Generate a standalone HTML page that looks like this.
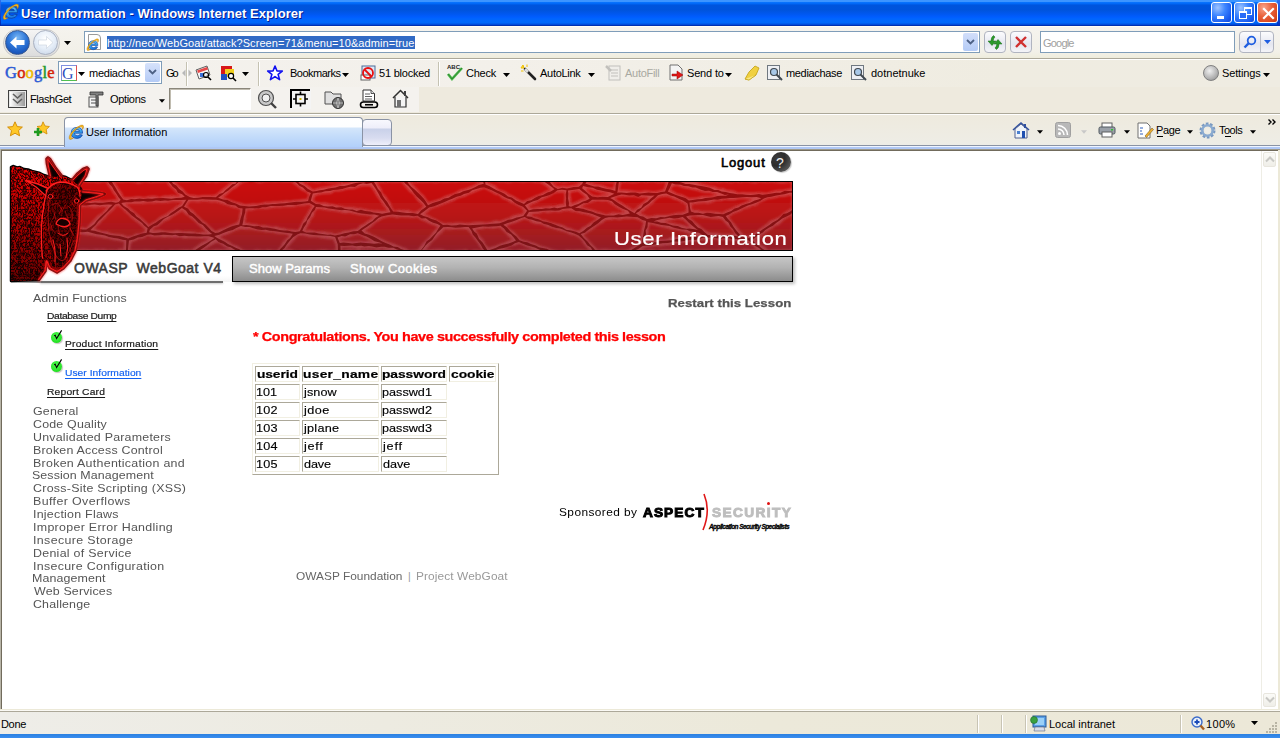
<!DOCTYPE html>
<html><head><meta charset="utf-8"><title>User Information</title>
<style>
html,body{margin:0;padding:0;width:1280px;height:738px;overflow:hidden;background:#fff;}
body{position:relative;font-family:"Liberation Sans",sans-serif;}
.a{position:absolute;box-sizing:border-box;}
.t{position:absolute;white-space:pre;line-height:1;}
svg{position:absolute;overflow:visible;}
</style></head><body>
<div class=a style="left:0;top:0;width:1280px;height:26px;background:linear-gradient(to bottom,#3d95ff 0px,#3d95ff 2px,#0a76ff 2px,#0066f5 4px,#0055dd 5px,#0054dc 10px,#0058f0 14px,#005dff 17px,#0066ff 19px,#0068f8 23px,#0050e0 24px,#0046d6 25px,#0030b0 25px,#0030b0 26px)"></div>
<div class=a style="left:0;top:0;width:1px;height:26px;background:linear-gradient(to bottom,#2a70f0,#0028b0)"></div>
<div class=a style="left:1277px;top:0;width:3px;height:26px;background:linear-gradient(to bottom,#2a70f0,#0030c0)"></div>

<svg style="left:2px;top:3px" width="17" height="17" viewBox="0 0 16 16">
<defs><linearGradient id="ieB23" x1="0" y1="0" x2="0.3" y2="1"><stop offset="0" stop-color="#8ce0ff"/><stop offset="0.5" stop-color="#3aa8f0"/><stop offset="1" stop-color="#1a78e0"/></linearGradient></defs>
<path d="M14.6 9.2 L6.4 9.2 Q6.6 11.8 9.2 11.8 Q10.9 11.8 11.9 10.6 L14.4 11 Q13 14.4 9.2 14.4 Q3.2 14.4 3.2 9 Q3.2 3.4 9.2 3.4 Q14.6 3.4 14.6 9.2 Z M6.5 7.3 L11.6 7.3 Q11.3 5.5 9.1 5.5 Q6.9 5.5 6.5 7.3 Z" fill="url(#ieB23)" stroke="#0c3c9c" stroke-width="0.7"/>
<path d="M1.8 15.4 Q-0.2 13.4 3.6 8.4 Q7.8 3 12.8 1.2 Q15.8 0.4 15.6 3 Q15.4 4.4 14.4 5.4 Q14.8 3 13.2 2.8 Q9.8 3 6.4 7 Q2.8 11.2 3 13.4 Q3.4 14.6 5.6 13.8 Q3.6 15.8 1.8 15.4 Z" fill="#fbbc1c" stroke="#b07008" stroke-width="0.45"/>
</svg>
<div class=a style="left:1211px;top:2px;width:21px;height:21px;border:1px solid #fff;border-radius:3px;background:radial-gradient(ellipse at 30% 25%,#9ec4ff 0%,#3e86ff 40%,#1c5ef0 75%,#1048d8 100%);overflow:hidden"><div class=a style="left:5px;top:13px;width:7px;height:3px;background:#fff"></div></div><div class=a style="left:1234px;top:2px;width:21px;height:21px;border:1px solid #fff;border-radius:3px;background:radial-gradient(ellipse at 30% 25%,#9ec4ff 0%,#3e86ff 40%,#1c5ef0 75%,#1048d8 100%);overflow:hidden"><div class=a style="left:9px;top:4px;width:8px;height:8px;border:1px solid #fff;border-top-width:2px"></div><div class=a style="left:4px;top:8px;width:8px;height:8px;border:1px solid #fff;border-top-width:2px;background:#2a6cf8"></div></div><div class=a style="left:1257px;top:2px;width:21px;height:21px;border:1px solid #fff;border-radius:3px;background:radial-gradient(ellipse at 30% 25%,#f8a58a 0%,#e8603a 45%,#d8461e 80%,#c03a14 100%);overflow:hidden"><svg style="left:5px;top:5px" width="11" height="11" viewBox="0 0 11 11"><path d="M1 1 L10 10 M10 1 L1 10" stroke="#fff" stroke-width="2.2" stroke-linecap="square"/></svg></div>
<div class=a style="left:0;top:26px;width:1280px;height:33px;background:linear-gradient(to bottom,#fffdf4 0,#fffdf4 1px,#f5f3ee 1px,#f2f0e8 26px,#eeecdc 32px)"></div>
<div class=a style="left:0;top:58px;width:1280px;height:1px;background:#aca899"></div>
<div class=a style="left:0;top:59px;width:1280px;height:1px;background:#fff"></div>

<div class=a style="left:3px;top:29px;width:57px;height:28px;border-radius:14px;background:linear-gradient(#f4f4f4,#dcdcdc);border:1px solid #c8c8c8"></div>
<div class=a style="left:5px;top:30px;width:25px;height:25px;border-radius:50%;background:radial-gradient(circle at 50% 30%,#7ab8f5 0%,#2e76d8 45%,#0a3fa8 100%);border:1px solid #3a5a90"></div>
<svg style="left:9px;top:35px" width="17" height="15" viewBox="0 0 17 15"><path d="M1 7.5 L7.5 1.5 L7.5 5 L15.5 5 L15.5 10 L7.5 10 L7.5 13.5 Z" fill="#fff"/></svg>
<div class=a style="left:33px;top:30px;width:25px;height:25px;border-radius:50%;background:radial-gradient(circle at 50% 35%,#ffffff 0%,#e6eef8 50%,#c2d0e4 100%);border:1px solid #a8b0c0"></div>
<svg style="left:37px;top:35px" width="17" height="15" viewBox="0 0 17 15"><path d="M16 7.5 L9.5 1.5 L9.5 5 L1.5 5 L1.5 10 L9.5 10 L9.5 13.5 Z" fill="#fff" stroke="#c8d0dc" stroke-width="0.6"/></svg>
<svg style="left:64px;top:41px" width="7" height="4" viewBox="0 0 7 4"><path d="M0 0 L7 0 L3.5 4 Z" fill="#000"/></svg>

<div class=a style="left:84px;top:31px;width:896px;height:22px;border:1px solid #7f9db9;background:#fff"></div>
<div class=a style="left:88px;top:34px;width:13px;height:16px;background:#fff;border:1px solid #9a9a9a;border-radius:0 4px 0 0"></div>

<svg style="left:86px;top:38px" width="13" height="13" viewBox="0 0 16 16">
<defs><linearGradient id="ieB8638" x1="0" y1="0" x2="0.3" y2="1"><stop offset="0" stop-color="#8ce0ff"/><stop offset="0.5" stop-color="#3aa8f0"/><stop offset="1" stop-color="#1a78e0"/></linearGradient></defs>
<path d="M14.6 9.2 L6.4 9.2 Q6.6 11.8 9.2 11.8 Q10.9 11.8 11.9 10.6 L14.4 11 Q13 14.4 9.2 14.4 Q3.2 14.4 3.2 9 Q3.2 3.4 9.2 3.4 Q14.6 3.4 14.6 9.2 Z M6.5 7.3 L11.6 7.3 Q11.3 5.5 9.1 5.5 Q6.9 5.5 6.5 7.3 Z" fill="url(#ieB8638)" stroke="#0c3c9c" stroke-width="0.7"/>
<path d="M1.8 15.4 Q-0.2 13.4 3.6 8.4 Q7.8 3 12.8 1.2 Q15.8 0.4 15.6 3 Q15.4 4.4 14.4 5.4 Q14.8 3 13.2 2.8 Q9.8 3 6.4 7 Q2.8 11.2 3 13.4 Q3.4 14.6 5.6 13.8 Q3.6 15.8 1.8 15.4 Z" fill="#fbbc1c" stroke="#b07008" stroke-width="0.45"/>
</svg>
<div class=a style="left:107px;top:36px;width:308px;height:13px;background:#316ac5"></div>
<div class=a style="left:963px;top:33px;width:15px;height:18px;background:linear-gradient(#d2defa,#b4cbf6);border-radius:2px"></div>
<svg style="left:966px;top:39px" width="9" height="6" viewBox="0 0 9 6"><path d="M1 1 L4.5 4.5 L8 1" fill="none" stroke="#4d6185" stroke-width="1.8"/></svg>
<div class=a style="left:984px;top:31px;width:22px;height:22px;border:1px solid #b0b4c0;border-radius:4px;background:linear-gradient(#fcfcfe,#e4e6f0 60%,#f4f4f8)"></div>
<svg style="left:986px;top:34px" width="18" height="17" viewBox="0 0 18 17"><path d="M7.5 1.5 Q5 3 5 7 L2 7 L6 11.5 L10 7 L7.2 7 Q7.2 4.5 9 3 Z" fill="#2a9a2a" stroke="#1a6a1a" stroke-width="0.5"/><path d="M10.5 15.5 Q13 14 13 10 L16 10 L12 5.5 L8 10 L10.8 10 Q10.8 12.5 9 14 Z" fill="#2a9a2a" stroke="#1a6a1a" stroke-width="0.5"/></svg>
<div class=a style="left:1010px;top:31px;width:22px;height:22px;border:1px solid #b0b4c0;border-radius:4px;background:linear-gradient(#fcfcfe,#e4e6f0 60%,#f4f4f8)"></div>
<svg style="left:1014px;top:35px" width="14" height="14" viewBox="0 0 14 14"><path d="M2 2 L12 12 M12 2 L2 12" stroke="#d03030" stroke-width="2.4"/></svg>
<div class=a style="left:1040px;top:31px;width:195px;height:22px;border:1px solid #7f9db9;background:#fff"></div>
<div class=a style="left:1239px;top:31px;width:35px;height:22px;border:1px solid #b0b4c0;border-radius:4px;background:linear-gradient(#fcfcfe,#e4e6f0 60%,#f4f4f8)"></div>
<div class=a style="left:1260px;top:32px;width:1px;height:20px;background:#b8bcc8"></div>
<svg style="left:1243px;top:35px" width="14" height="14" viewBox="0 0 14 14"><circle cx="8.5" cy="5.5" r="3.8" fill="none" stroke="#1f5ee0" stroke-width="1.8"/><path d="M5.8 8.2 L1.5 12.5" stroke="#1f5ee0" stroke-width="2.4"/></svg>
<svg style="left:1264px;top:40px" width="7" height="4" viewBox="0 0 7 4"><path d="M0 0 L7 0 L3.5 4 Z" fill="#1f5ee0"/></svg>

<div class=a style="left:0;top:60px;width:1280px;height:53px;background:#eeeade"></div>
<div class=a style="left:0;top:60px;width:1280px;height:27px;background:linear-gradient(to right,#f4f2ee 0,#f3f0ea 500px,#efece1 1000px,#efece2 1280px)"></div>
<div class=a style="left:0;top:87px;width:419px;height:25px;background:#f4f2ee"></div>
<div class=a style="left:0;top:113px;width:1280px;height:1px;background:#aca899"></div>
<div class=a style="left:0;top:114px;width:1280px;height:1px;background:#fff"></div>

<div class=a style="left:58px;top:61px;width:104px;height:23px;border:1px solid #7f9db9;background:#fff"></div>
<div class=a style="left:61px;top:65px;width:16px;height:16px;border:1px solid;border-color:#8090e0 #e05050 #50c050 #8090e0;background:#fff"></div>
<div class=a style="left:145px;top:63px;width:15px;height:19px;background:linear-gradient(#d6e2fb,#b4cbf6);border-radius:2px"></div>
<svg style="left:148px;top:69px" width="9" height="6" viewBox="0 0 9 6"><path d="M1 1 L4.5 4.5 L8 1" fill="none" stroke="#4d6185" stroke-width="1.8"/></svg>
<svg style="left:78px;top:72px" width="7" height="4" viewBox="0 0 7 4"><path d="M0 0 L7 0 L3.5 4 Z" fill="#000"/></svg><div class=a style="left:186px;top:62px;width:1px;height:24px;background:#c5c2b2;box-shadow:1px 0 0 #fff"></div><div class=a style="left:258px;top:62px;width:1px;height:24px;background:#c5c2b2;box-shadow:1px 0 0 #fff"></div><div class=a style="left:438px;top:62px;width:1px;height:24px;background:#c5c2b2;box-shadow:1px 0 0 #fff"></div>
<svg style="left:182px;top:69px" width="10" height="8" viewBox="0 0 10 8"><path d="M0 4 L3.5 0.5 L3.5 7.5 Z M10 4 L6.5 0.5 L6.5 7.5 Z" fill="#b8b8b8"/></svg>
<svg style="left:195px;top:65px" width="17" height="16" viewBox="0 0 17 16"><path d="M1 5 L12 1 L15 10 L4 14 Z" fill="#f4f4f4" stroke="#606060"/><path d="M2 5.5 L12 2 L13 4.5 L3 8 Z" fill="#e84848"/><rect x="5" y="8" width="4" height="4" fill="#3a70d8"/><circle cx="11" cy="10" r="2.5" fill="none" stroke="#000" stroke-width="1.2"/><path d="M13 12 L16 15" stroke="#000" stroke-width="1.6"/></svg>
<svg style="left:220px;top:65px" width="17" height="16" viewBox="0 0 17 16"><rect x="1" y="1" width="11" height="10" fill="#d81818"/><rect x="5" y="4" width="9" height="8" fill="#f0d020"/><rect x="1" y="9" width="6" height="6" fill="#2050c0"/><circle cx="11" cy="11" r="2.6" fill="#fff" stroke="#000" stroke-width="1.2"/><path d="M13 13 L16 16" stroke="#000" stroke-width="1.6"/></svg>
<svg style="left:242px;top:72px" width="7" height="4" viewBox="0 0 7 4"><path d="M0 0 L7 0 L3.5 4 Z" fill="#000"/></svg>
<svg style="left:267px;top:65px" width="16" height="16" viewBox="0 0 16 16"><path d="M8 1 L10 6 L15.3 6.1 L11.1 9.4 L12.6 14.6 L8 11.6 L3.4 14.6 L4.9 9.4 L0.7 6.1 L6 6 Z" fill="#fff" stroke="#1010f0" stroke-width="1.6" stroke-linejoin="round"/></svg><svg style="left:342px;top:73px" width="7" height="4" viewBox="0 0 7 4"><path d="M0 0 L7 0 L3.5 4 Z" fill="#000"/></svg>
<svg style="left:360px;top:65px" width="17" height="16" viewBox="0 0 17 16"><rect x="2" y="1" width="13" height="12" fill="#dfe8f4" stroke="#4a6a98"/><rect x="1" y="10" width="9" height="5" fill="#fff" stroke="#606060"/><circle cx="8" cy="8" r="5" fill="none" stroke="#e81010" stroke-width="1.8"/><path d="M4.5 4.5 L11.5 11.5" stroke="#e81010" stroke-width="1.8"/></svg>
<svg style="left:446px;top:63px" width="18" height="18" viewBox="0 0 18 18"><text x="1" y="6" font-family="Liberation Sans" font-size="6" font-weight="bold" fill="#222">ABC</text><path d="M2 11 L6 16 L16 5" fill="none" stroke="#48b848" stroke-width="2.6"/><path d="M2 11 L6 16 L16 5" fill="none" stroke="#2c7a2c" stroke-width="0.8"/></svg><svg style="left:503px;top:73px" width="7" height="4" viewBox="0 0 7 4"><path d="M0 0 L7 0 L3.5 4 Z" fill="#000"/></svg>
<svg style="left:520px;top:64px" width="17" height="17" viewBox="0 0 17 17"><path d="M5 5 L15 15" stroke="#222" stroke-width="2.6" stroke-linecap="round"/><path d="M5 5 L8 8" stroke="#ddd" stroke-width="2.6"/><path d="M3 1 L4 4 L1 4 Z M7 0.5 L7 3 M1 7 L3.5 7" stroke="#f0c000" fill="#f8d848" stroke-width="1"/></svg><svg style="left:588px;top:73px" width="7" height="4" viewBox="0 0 7 4"><path d="M0 0 L7 0 L3.5 4 Z" fill="#000"/></svg>
<svg style="left:605px;top:64px" width="17" height="17" viewBox="0 0 17 17" opacity="0.45"><rect x="4" y="2" width="11" height="14" fill="#eee" stroke="#888"/><path d="M6 6 L13 6 M6 9 L13 9 M6 12 L13 12" stroke="#888"/><path d="M1 2 L6 7" stroke="#888" stroke-width="2.5"/></svg>
<svg style="left:668px;top:64px" width="17" height="17" viewBox="0 0 17 17"><path d="M2 1 L10 1 L14 5 L14 16 L2 16 Z" fill="#f4f4f4" stroke="#707070"/><path d="M4 10 L9 10 L9 7 L15 11 L9 15 L9 12 L4 12 Z" fill="#e01818" stroke="#900" stroke-width="0.5"/></svg><svg style="left:725px;top:73px" width="7" height="4" viewBox="0 0 7 4"><path d="M0 0 L7 0 L3.5 4 Z" fill="#000"/></svg>
<svg style="left:744px;top:65px" width="16" height="16" viewBox="0 0 16 16"><path d="M1 14 L5 7 L11 1 L15 3 L12 10 L5 15 Z" fill="#f0d040" stroke="#c0a010" stroke-width="0.8"/><path d="M1 14 L5 15 L12 10" fill="#f8e888" stroke="#c0a010" stroke-width="0.6"/></svg>
<svg style="left:767px;top:65px" width="17" height="16" viewBox="0 0 17 16"><rect x="0.5" y="0.5" width="12" height="14" fill="#eef0f4" stroke="#707880"/><circle cx="7" cy="7" r="3.5" fill="#a8c8e8" stroke="#404850" stroke-width="1.2"/><path d="M9.5 9.5 L15 15" stroke="#404850" stroke-width="2"/></svg>
<svg style="left:851px;top:65px" width="17" height="16" viewBox="0 0 17 16"><rect x="0.5" y="0.5" width="12" height="14" fill="#eef0f4" stroke="#707880"/><circle cx="7" cy="7" r="3.5" fill="#a8c8e8" stroke="#404850" stroke-width="1.2"/><path d="M9.5 9.5 L15 15" stroke="#404850" stroke-width="2"/></svg>

<div class=a style="left:1203px;top:65px;width:16px;height:16px;border-radius:50%;background:radial-gradient(circle at 40% 35%,#f0f0f0,#a8a8a8 70%,#707070);border:1px solid #808080"></div><svg style="left:1263px;top:73px" width="7" height="4" viewBox="0 0 7 4"><path d="M0 0 L7 0 L3.5 4 Z" fill="#000"/></svg>
<svg style="left:8px;top:90px" width="19" height="18" viewBox="0 0 19 18"><rect x="0.5" y="0.5" width="18" height="17" fill="#e8e8e8" stroke="#404040"/><rect x="2" y="2" width="15" height="14" fill="url(#fgg)"/><defs><linearGradient id="fgg" x1="0" x2="1"><stop offset="0" stop-color="#fff"/><stop offset="1" stop-color="#9a9a9a"/></linearGradient></defs><path d="M5 4 L9.5 8 L14 4 M5 9 L9.5 13 L14 9" fill="none" stroke="#606060" stroke-width="1.6"/></svg>
<svg style="left:86px;top:89px" width="20" height="19" viewBox="0 0 20 19"><rect x="3" y="8" width="9" height="10" fill="#f4f4f4" stroke="#505050"/><path d="M5 11 L10 11 M5 14 L10 14" stroke="#505050"/><path d="M4 3 L17 3 L17 6 L12 6 L12 17 L10 17 L10 6 L4 6 Z" fill="#808080" stroke="#303030" stroke-width="0.8"/></svg>
<svg style="left:159px;top:99px" width="6" height="4" viewBox="0 0 7 4"><path d="M0 0 L7 0 L3.5 4 Z" fill="#000"/></svg>
<div class=a style="left:169px;top:88px;width:82px;height:22px;border:1px solid;border-color:#8a867a #fff #fff #8a867a;background:#fff;box-shadow:inset 1px 1px 0 #c0bcb0"></div>
<svg style="left:257px;top:89px" width="20" height="20" viewBox="0 0 20 20"><circle cx="9" cy="9" r="7.5" fill="#c8c8c8" stroke="#505050" stroke-width="1.2"/><circle cx="9" cy="9" r="4" fill="#f0f0f0" stroke="#505050"/><path d="M14 14 L19 19" stroke="#404040" stroke-width="2.4"/></svg>
<svg style="left:290px;top:89px" width="21" height="20" viewBox="0 0 21 20"><rect x="0" y="0" width="21" height="20" fill="#f4f4f4"/><path d="M1 19 L1 1 L20 1" fill="none" stroke="#000" stroke-width="2"/><rect x="6" y="5.5" width="9" height="9" fill="none" stroke="#000" stroke-width="1.6"/><path d="M10.5 2.5 L10.5 5.5 M10.5 14.5 L10.5 17.5 M3 10 L6 10 M15 10 L18 10" stroke="#000" stroke-width="1.6"/><rect x="9.5" y="9" width="2" height="2" fill="#c8b000"/></svg>
<svg style="left:324px;top:89px" width="21" height="20" viewBox="0 0 21 20"><path d="M1 3 L7 3 L9 5 L17 5 L17 15 L1 15 Z" fill="#e0e0e0" stroke="#505050"/><circle cx="14" cy="14" r="5.5" fill="#707070" stroke="#303030"/><path d="M9 14 L19 14 M14 9 Q11 14 14 19 M14 9 Q17 14 14 19" stroke="#d0d0d0" stroke-width="0.7" fill="none"/></svg>
<svg style="left:359px;top:89px" width="20" height="20" viewBox="0 0 20 20"><path d="M4 1 L12 1 L15.5 4.5 L15.5 12 L4 12 Z" fill="#fff" stroke="#303030"/><path d="M12 1 L12 4.5 L15.5 4.5" fill="#ddd" stroke="#303030" stroke-width="0.8"/><path d="M6 5 L11 5 M6 7.5 L13 7.5 M6 10 L13 10" stroke="#606060"/><rect x="1.5" y="13" width="17" height="5.5" rx="2.75" fill="none" stroke="#000" stroke-width="1.6"/><path d="M6 15.75 L14 15.75" stroke="#000" stroke-width="1.6"/></svg>
<svg style="left:392px;top:89px" width="17" height="19" viewBox="0 0 17 19"><path d="M1 9 L8.5 1.5 L16 9" fill="none" stroke="#303030" stroke-width="1.5"/><rect x="12" y="2" width="2" height="5" fill="#404040"/><path d="M3 8 L3 18 L14 18 L14 8" fill="#f4f4f4" stroke="#303030" stroke-width="1.2"/><rect x="5" y="11" width="4" height="7" fill="#707070"/></svg>

<div class=a style="left:0;top:115px;width:1280px;height:30px;background:linear-gradient(#eeeade,#eeede6)"></div>
<div class=a style="left:0;top:145px;width:1280px;height:1px;background:#8a93a5"></div>
<div class=a style="left:0;top:146px;width:1280px;height:1px;background:#eef4ff"></div>
<div class=a style="left:0;top:147px;width:1280px;height:2px;background:#b0c8f5"></div>
<svg style="left:7px;top:121px" width="16" height="16" viewBox="0 0 16 16"><path d="M8 0.8 L10.2 5.6 L15.4 6.1 L11.5 9.6 L12.6 14.8 L8 12.2 L3.4 14.8 L4.5 9.6 L0.6 6.1 L5.8 5.6 Z" fill="#ffc828" stroke="#d08800" stroke-width="0.9" stroke-linejoin="round"/></svg>
<svg style="left:34px;top:121px" width="16" height="16" viewBox="0 0 16 16"><path d="M9 0.8 L11 5 L15.4 5.5 L12.2 8.6 L13 13 L9 10.8 L5.5 12.8 L6.3 8.6 L3 5.5 L7.4 5 Z" fill="#ffc828" stroke="#d08800" stroke-width="0.8"/><path d="M4 7 L4 15 M0 11 L8 11" stroke="#1e9a1e" stroke-width="2.6"/></svg>
<div class=a style="left:64px;top:117px;width:299px;height:30px;border:1px solid #8a93a5;border-bottom:none;border-radius:4px 4px 0 0;background:linear-gradient(#ffffff 0,#fdfeff 9px,#d4e6fb 10px,#c4dcfa 18px,#b2d0fa 29px)"></div>
<div class=a style="left:362px;top:119px;width:30px;height:27px;border:1px solid #8a93a5;border-radius:4px;background:linear-gradient(#f8f8fe 0,#eeeefa 8px,#c9d1e9 9px,#d8dcf0 18px,#f2f2fc 26px)"></div>

<svg style="left:68px;top:124px" width="16" height="16" viewBox="0 0 16 16">
<defs><linearGradient id="ieB68124" x1="0" y1="0" x2="0.3" y2="1"><stop offset="0" stop-color="#8ce0ff"/><stop offset="0.5" stop-color="#3aa8f0"/><stop offset="1" stop-color="#1a78e0"/></linearGradient></defs>
<path d="M14.6 9.2 L6.4 9.2 Q6.6 11.8 9.2 11.8 Q10.9 11.8 11.9 10.6 L14.4 11 Q13 14.4 9.2 14.4 Q3.2 14.4 3.2 9 Q3.2 3.4 9.2 3.4 Q14.6 3.4 14.6 9.2 Z M6.5 7.3 L11.6 7.3 Q11.3 5.5 9.1 5.5 Q6.9 5.5 6.5 7.3 Z" fill="url(#ieB68124)" stroke="#0c3c9c" stroke-width="0.7"/>
<path d="M1.8 15.4 Q-0.2 13.4 3.6 8.4 Q7.8 3 12.8 1.2 Q15.8 0.4 15.6 3 Q15.4 4.4 14.4 5.4 Q14.8 3 13.2 2.8 Q9.8 3 6.4 7 Q2.8 11.2 3 13.4 Q3.4 14.6 5.6 13.8 Q3.6 15.8 1.8 15.4 Z" fill="#fbbc1c" stroke="#b07008" stroke-width="0.45"/>
</svg>
<svg style="left:1012px;top:122px" width="18" height="17" viewBox="0 0 18 17"><path d="M1 8 L9 1 L17 8" fill="none" stroke="#3050a0" stroke-width="1.6"/><path d="M3 7 L3 16 L15 16 L15 7 L9 2 Z" fill="#f0f4fa" stroke="#506090"/><rect x="10" y="9" width="3" height="7" fill="#2050b0"/><rect x="5" y="9" width="3" height="3" fill="#4a80d0"/><rect x="12" y="2" width="2" height="4" fill="#3050a0"/></svg>
<svg style="left:1037px;top:130px" width="6" height="4" viewBox="0 0 7 4"><path d="M0 0 L7 0 L3.5 4 Z" fill="#000"/></svg>
<svg style="left:1055px;top:122px" width="16" height="16" viewBox="0 0 16 16"><rect x="0.5" y="0.5" width="15" height="15" rx="2" fill="#b8b8b8" stroke="#a0a0a0"/><circle cx="4.5" cy="11.5" r="1.5" fill="#fff"/><path d="M3 7 A6 6 0 0 1 9 13 M3 3.5 A9.5 9.5 0 0 1 12.5 13" stroke="#fff" stroke-width="1.6" fill="none"/></svg>
<svg style="left:1081px;top:130px" width="6" height="4" viewBox="0 0 7 4"><path d="M0 0 L7 0 L3.5 4 Z" fill="#c8c8c8"/></svg>
<svg style="left:1098px;top:122px" width="18" height="16" viewBox="0 0 18 16"><rect x="4" y="1" width="10" height="5" fill="#fff" stroke="#606060"/><rect x="1" y="5" width="16" height="7" rx="1.5" fill="#9aa0a8" stroke="#505860"/><rect x="4" y="10" width="10" height="5" fill="#fff" stroke="#606060"/><rect x="13" y="7" width="2" height="1.5" fill="#30c030"/></svg>
<svg style="left:1124px;top:130px" width="6" height="4" viewBox="0 0 7 4"><path d="M0 0 L7 0 L3.5 4 Z" fill="#000"/></svg>
<svg style="left:1137px;top:122px" width="17" height="17" viewBox="0 0 17 17"><path d="M1 1 L10 1 L13 4 L13 16 L1 16 Z" fill="#fff" stroke="#707070"/><path d="M3 6 L6 6 M3 9 L5 9 M3 12 L6 12" stroke="#3060c0" stroke-width="1.2"/><path d="M8 14 L15 6 L16.5 7.5 L9.5 15.5 Z" fill="#f0b030" stroke="#806020" stroke-width="0.6"/></svg>
<svg style="left:1187px;top:130px" width="6" height="4" viewBox="0 0 7 4"><path d="M0 0 L7 0 L3.5 4 Z" fill="#000"/></svg>
<svg style="left:1199px;top:122px" width="17" height="17" viewBox="0 0 17 17"><path d="M7 0.5 L10 0.5 L10.5 2.6 L12.4 3.4 L14.2 2.2 L16.3 4.4 L15.1 6.2 L15.9 8 L18 8.5 L18 11.5" fill="none"/><circle cx="8.5" cy="8.5" r="6.2" fill="none" stroke="#7898c0" stroke-width="3.6" stroke-dasharray="2.4 1.45"/><circle cx="8.5" cy="8.5" r="5.2" fill="none" stroke="#8aaad0" stroke-width="2.6"/><circle cx="8.5" cy="8.5" r="2.6" fill="#f0eee6"/></svg>
<svg style="left:1250px;top:130px" width="6" height="4" viewBox="0 0 7 4"><path d="M0 0 L7 0 L3.5 4 Z" fill="#000"/></svg>
<svg style="left:1268px;top:119px" width="9" height="6" viewBox="0 0 9 6"><path d="M0.5 0.5 L3 3 L0.5 5.5 M4.5 0.5 L7 3 L4.5 5.5" fill="none" stroke="#000" stroke-width="1.4"/></svg>

<div class=a style="left:0;top:149px;width:1280px;height:1px;background:#9d9888"></div>
<div class=a style="left:0;top:150px;width:1280px;height:1px;background:#716b5c"></div>
<div class=a style="left:0;top:149px;width:1px;height:563px;background:#b8b5a8"></div>
<div class=a style="left:1px;top:150px;width:1px;height:560px;background:#716b5c"></div>
<div class=a style="left:1278px;top:150px;width:2px;height:562px;background:#ece9d8"></div>
<div class=a style="left:1261px;top:151px;width:1px;height:559px;background:#eeede5"></div>
<div class=a style="left:1263px;top:152px;width:13px;height:15px;border:1px solid #e8e6de;border-radius:2px;background:linear-gradient(#fbfbf8,#efeee8)"></div>
<svg style="left:1265px;top:156px" width="10" height="6" viewBox="0 0 10 6"><path d="M1 5.5 L5 1.5 L9 5.5" fill="none" stroke="#c8c8c4" stroke-width="2"/></svg>
<div class=a style="left:1263px;top:693px;width:13px;height:14px;border:1px solid #e8e6de;border-radius:2px;background:linear-gradient(#fbfbf8,#efeee8)"></div>
<svg style="left:1265px;top:697px" width="10" height="6" viewBox="0 0 10 6"><path d="M1 0.5 L5 4.5 L9 0.5" fill="none" stroke="#c8c8c4" stroke-width="2"/></svg>

<div class=a style="left:0;top:709px;width:1280px;height:1px;background:#ece9d8"></div>
<div class=a style="left:0;top:710px;width:1280px;height:1px;background:#fbfaf5"></div>
<div class=a style="left:0;top:711px;width:1280px;height:1px;background:#aca899"></div>
<div class=a style="left:0;top:712px;width:1280px;height:22px;background:linear-gradient(to right,#eeede8,#ece9da 60%,#ece8d8)"></div>
<div class=a style="left:0;top:734px;width:1280px;height:4px;background:linear-gradient(#2a80e0,#3a8ef0)"></div>
<div class=a style="left:977px;top:715px;width:1px;height:18px;background:#c8c4b4;box-shadow:1px 0 0 #fff"></div>
<div class=a style="left:1001px;top:715px;width:1px;height:18px;background:#c8c4b4;box-shadow:1px 0 0 #fff"></div>
<div class=a style="left:1025px;top:715px;width:1px;height:18px;background:#c8c4b4;box-shadow:1px 0 0 #fff"></div>
<div class=a style="left:1180px;top:715px;width:1px;height:18px;background:#c8c4b4;box-shadow:1px 0 0 #fff"></div>
<svg style="left:1030px;top:715px" width="17" height="17" viewBox="0 0 17 17"><rect x="3" y="1" width="13" height="11" fill="#5aa0e8" stroke="#2a5a98"/><rect x="5" y="3" width="9" height="7" fill="#9ad0f8"/><circle cx="4" cy="5" r="3.5" fill="#3aa040" stroke="#1a6020" stroke-width="0.5"/><path d="M5 12 L14 12 L15 16 L4 16 Z" fill="#d8dce8" stroke="#606880" stroke-width="0.6"/></svg>
<svg style="left:1191px;top:716px" width="14" height="15" viewBox="0 0 14 15"><circle cx="6" cy="6" r="5" fill="#e8f0fa" stroke="#3a6ac8" stroke-width="1.4"/><path d="M3.5 6 L8.5 6 M6 3.5 L6 8.5" stroke="#1a4ab8" stroke-width="1.8"/><path d="M9.5 9.5 L13 13.5" stroke="#a86020" stroke-width="2.4"/></svg>
<svg style="left:1251px;top:721px" width="7" height="4" viewBox="0 0 7 4"><path d="M0 0 L7 0 L3.5 4 Z" fill="#000"/></svg>
<svg style="left:1265px;top:720px" width="13" height="13" viewBox="0 0 13 13"><g fill="#b8b4a4"><rect x="10" y="2" width="2" height="2"/><rect x="7" y="5" width="2" height="2"/><rect x="10" y="5" width="2" height="2"/><rect x="4" y="8" width="2" height="2"/><rect x="7" y="8" width="2" height="2"/><rect x="10" y="8" width="2" height="2"/><rect x="1" y="11" width="2" height="2"/><rect x="4" y="11" width="2" height="2"/><rect x="7" y="11" width="2" height="2"/><rect x="10" y="11" width="2" height="2"/></g></svg>

<div class=a style="left:771px;top:152px;width:20px;height:20px;border-radius:50%;background:radial-gradient(circle at 30% 30%,#3c3c3c 0%,#2c2c2c 40%,#555 75%,#9a9a9a 100%);box-shadow:1px 1px 1px rgba(0,0,0,.2)"></div>
<svg style="left:11px;top:181px" width="783" height="71" viewBox="0 0 783 71">
<defs>
<linearGradient id="bgroove" x1="0" y1="0" x2="0" y2="1"><stop offset="0" stop-color="#9a0c0c"/><stop offset="1" stop-color="#781418"/></linearGradient>
<linearGradient id="bred" gradientUnits="userSpaceOnUse" x1="0" y1="0" x2="0" y2="70"><stop offset="0" stop-color="#cc0a0a"/><stop offset="0.5" stop-color="#b81616"/><stop offset="1" stop-color="#922028"/></linearGradient>
<linearGradient id="bpink" gradientUnits="userSpaceOnUse" x1="0" y1="0" x2="0" y2="70"><stop offset="0" stop-color="#d44646"/><stop offset="1" stop-color="#ac444c"/></linearGradient>
<filter id="blur1" x="-5%" y="-20%" width="110%" height="140%"><feGaussianBlur stdDeviation="0.8"/></filter>
</defs>
<rect x="0" y="0" width="782" height="70" fill="url(#bgroove)"/>
<clipPath id="bclip"><rect x="1" y="1" width="780" height="68"/></clipPath><g clip-path="url(#bclip)"><g fill="url(#bpink)"><path d="M115.3 59.3 L111.4 58.8 L106.9 57.6 L102.9 57.0 L97.9 55.9 L94.0 54.6 L89.8 53.8 L85.8 53.3 L81.1 52.1 L76.7 50.7 L71.8 51.3 L66.9 51.1 L62.5 50.8 L58.3 50.4 L54.2 49.2 L53.0 54.5 L50.8 58.0 L49.2 61.9 L48.0 66.2 L45.9 70.2 L49.7 70.1 L54.5 70.5 L58.4 70.6 L61.8 70.4 L65.9 70.6 L70.0 70.4 L73.6 70.2 L78.9 70.3 L81.8 70.7 L86.8 70.0 L90.2 70.3 L93.6 70.9 L98.3 70.6 L102.1 70.7 L106.2 70.5 L110.0 70.1 L115.0 70.4 L115.1 65.0 Z"/><path d="M59.1 21.7 L64.0 21.9 L67.1 21.4 L72.1 21.8 L75.7 21.6 L79.8 21.9 L84.1 21.6 L87.6 21.7 L91.8 21.8 L95.6 21.3 L100.2 20.7 L105.0 21.8 L107.7 20.9 L109.7 18.7 L107.5 16.2 L105.2 12.4 L102.8 9.3 L101.2 6.1 L98.5 3.2 L96.1 -1.0 L91.4 -0.2 L88.3 -0.5 L83.9 -0.8 L79.5 -1.0 L75.1 -0.9 L71.5 -0.7 L66.7 -1.1 L62.2 -0.2 L58.4 -0.8 L53.8 -1.3 L49.7 -0.5 L45.3 -1.0 L47.7 3.0 L49.5 6.6 L52.1 10.9 L54.4 14.5 L57.7 18.0 Z"/><path d="M8.9 70.8 L13.1 70.4 L16.9 71.2 L21.7 71.0 L26.4 70.2 L30.0 71.0 L34.7 70.8 L39.2 71.0 L42.6 70.5 L45.1 66.7 L45.8 62.7 L48.5 58.3 L49.8 53.3 L51.3 50.1 L47.2 48.7 L42.5 47.1 L37.6 45.9 L34.2 44.5 L31.2 48.4 L27.2 51.3 L24.3 54.7 L21.2 57.6 L18.2 60.8 L14.7 64.4 L12.4 67.1 Z"/><path d="M31.5 44.3 L28.3 42.2 L23.0 40.6 L19.0 40.9 L15.8 39.8 L10.8 39.6 L7.9 38.2 L3.5 38.5 L-0.4 38.1 L-0.9 42.0 L-1.2 47.2 L-0.5 50.5 L-1.2 53.9 L-1.0 58.7 L-0.8 62.7 L-1.3 66.8 L-0.8 71.3 L6.7 70.8 L8.5 67.8 L11.3 64.6 L14.4 61.5 L17.5 59.0 L20.2 56.0 L22.6 52.7 L25.7 49.9 L28.7 47.2 Z"/><path d="M58.9 24.5 L55.8 26.9 L51.1 28.1 L46.6 29.9 L43.3 32.2 L39.2 34.4 L34.8 35.9 L31.5 38.1 L27.6 39.9 L33.8 42.7 L38.4 43.0 L43.9 44.7 L48.6 45.2 L53.2 46.7 L57.6 46.4 L62.5 48.0 L67.4 47.7 L71.8 48.6 L75.3 48.6 L79.7 45.8 L83.3 42.9 L85.8 39.4 L89.1 36.0 L91.9 33.4 L95.8 29.9 L98.0 26.9 L101.7 23.7 L97.5 23.4 L92.7 23.8 L88.8 24.3 L83.7 23.6 L80.2 23.8 L75.3 24.5 L71.9 24.4 L67.3 24.7 L63.2 24.8 Z"/><path d="M23.3 38.2 L27.1 36.4 L30.1 35.3 L34.7 33.5 L39.1 31.3 L41.3 29.2 L45.2 27.5 L49.4 25.2 L53.1 23.6 L56.8 22.4 L54.2 18.6 L51.8 14.5 L49.0 10.9 L48.1 7.9 L45.5 3.6 L42.4 0.0 L38.3 -0.6 L33.9 -0.5 L29.5 -0.6 L25.0 -0.7 L22.0 -0.6 L16.7 -0.3 L12.7 -1.0 L8.0 -0.2 L3.9 -0.5 L0.1 -0.8 L-0.5 3.3 L0.1 6.8 L-0.8 11.4 L-0.3 15.9 L0.0 19.1 L-0.2 23.6 L-0.8 28.0 L-0.9 31.0 L-0.7 35.3 L3.2 36.5 L7.6 37.4 L11.5 36.5 L15.3 37.2 L19.1 38.1 Z"/><path d="M111.5 21.7 L110.3 22.2 L112.8 24.9 L117.1 27.5 L119.5 29.9 L123.2 32.2 L125.5 35.4 L128.9 37.7 L131.8 40.5 L134.8 43.2 L137.3 45.9 L141.8 43.2 L145.0 41.5 L148.3 39.0 L152.0 37.1 L157.0 35.1 L159.6 32.2 L163.4 29.7 L167.6 26.8 L171.1 24.9 L175.3 18.8 L170.3 19.0 L166.6 19.1 L162.3 19.0 L157.0 19.8 L153.9 19.6 L149.5 20.1 L145.0 19.6 L140.9 20.5 L136.2 20.7 L132.3 19.9 L128.8 20.5 L123.6 20.6 L120.3 21.3 L115.5 21.2 Z"/><path d="M138.9 48.7 L138.1 51.3 L141.8 51.9 L146.2 51.8 L150.3 51.2 L154.5 51.2 L159.0 51.9 L162.8 52.2 L167.4 51.9 L170.8 52.1 L174.9 52.3 L180.6 52.4 L184.4 52.4 L188.5 52.9 L192.6 53.4 L197.5 53.4 L201.1 53.0 L198.0 50.4 L194.8 47.6 L191.8 43.9 L187.7 42.1 L184.4 38.6 L181.1 35.4 L177.9 34.0 L175.0 29.7 L170.9 27.1 L168.1 29.2 L163.8 32.2 L160.8 34.0 L156.4 35.9 L152.9 37.9 L149.9 40.9 L146.2 44.2 L142.8 45.3 Z"/><path d="M203.3 55.0 L205.8 56.7 L208.7 58.2 L213.8 60.7 L217.0 63.0 L221.8 65.2 L224.8 66.8 L228.9 68.5 L232.1 70.8 L236.4 70.8 L241.2 71.7 L245.1 70.7 L249.7 71.0 L254.5 70.6 L258.1 70.1 L262.4 71.0 L267.1 70.4 L270.0 67.2 L273.5 63.4 L276.3 59.3 L279.1 57.1 L281.8 52.8 L278.7 52.2 L274.3 51.7 L270.6 51.2 L265.8 50.6 L262.1 49.9 L258.5 49.8 L254.7 48.7 L250.7 48.9 L246.7 48.4 L242.2 47.2 L238.5 46.1 L234.2 45.9 L229.9 44.9 L225.4 47.1 L221.8 49.1 L217.1 50.2 L212.4 52.0 L208.3 53.7 Z"/><path d="M204.7 58.3 L200.2 60.7 L197.4 63.3 L193.4 66.2 L189.7 68.7 L185.0 70.6 L189.3 70.8 L193.2 70.7 L198.3 70.0 L201.9 70.3 L206.1 71.0 L210.2 71.0 L213.7 71.1 L218.3 70.9 L222.8 69.7 L226.6 70.8 L223.8 68.8 L219.6 66.2 L216.3 65.5 L212.1 62.8 L207.7 61.2 Z"/><path d="M112.3 18.6 L115.9 19.2 L120.1 17.9 L123.8 18.3 L128.6 17.5 L132.2 18.1 L136.9 17.4 L141.1 17.8 L144.2 17.3 L149.2 17.0 L152.3 16.9 L157.6 17.5 L160.5 17.8 L165.1 17.0 L170.2 16.8 L173.8 15.8 L171.1 13.2 L166.9 11.8 L165.2 8.6 L161.6 5.7 L159.6 2.9 L156.0 -1.0 L152.0 -1.4 L147.3 -0.5 L143.6 -0.6 L139.9 0.2 L136.4 -0.6 L132.4 -0.8 L127.7 -0.2 L123.3 -0.6 L119.3 -0.5 L116.4 -0.8 L111.8 -0.9 L107.2 -1.0 L104.2 0.4 L99.8 -0.8 L102.4 3.2 L104.9 7.3 L107.1 11.2 L109.3 14.6 Z"/><path d="M178.7 15.9 L182.6 17.1 L186.9 16.7 L191.7 16.0 L195.9 15.9 L200.0 16.0 L204.8 16.2 L208.3 13.1 L212.1 11.7 L214.9 8.7 L217.8 6.6 L221.2 3.2 L224.6 2.7 L226.8 -0.6 L223.7 -1.0 L220.1 -1.4 L215.6 -0.4 L211.4 -1.1 L207.5 -1.1 L204.1 -1.3 L199.8 -1.5 L195.7 -1.0 L190.3 -1.0 L186.9 -1.1 L184.0 -1.4 L178.9 -0.4 L175.4 -0.3 L171.4 -1.3 L167.3 -0.5 L163.7 -1.0 L159.3 -1.0 L162.1 2.7 L165.4 4.4 L168.2 8.0 L171.7 10.6 L174.3 13.5 Z"/><path d="M136.6 47.2 L133.0 44.6 L131.0 41.9 L126.8 39.1 L123.8 36.8 L120.7 34.6 L117.6 31.6 L114.4 28.5 L110.6 25.4 L107.9 22.6 L104.1 23.6 L101.9 26.0 L99.1 29.0 L96.4 31.5 L93.0 35.0 L90.6 37.6 L87.4 40.4 L84.8 44.1 L81.5 47.1 L79.4 49.2 L83.6 49.7 L86.8 50.7 L91.5 51.9 L95.7 53.0 L99.3 54.0 L103.8 54.4 L108.5 55.1 L112.3 56.0 L117.1 57.5 L121.9 55.6 L125.9 54.2 L130.9 52.5 L135.7 51.7 Z"/><path d="M203.5 57.0 L201.4 56.2 L197.7 55.2 L193.4 55.2 L189.6 55.4 L185.8 55.5 L180.6 55.3 L177.5 55.2 L173.5 54.7 L168.6 55.2 L164.4 53.8 L161.2 54.3 L156.6 53.9 L152.1 53.8 L148.3 54.3 L143.5 54.4 L139.8 53.5 L136.5 53.8 L131.1 55.9 L126.8 56.6 L122.7 58.4 L118.0 59.6 L117.3 65.5 L116.7 70.8 L121.9 71.1 L125.4 71.8 L129.7 70.6 L134.1 70.5 L138.5 71.4 L142.0 70.7 L146.5 70.9 L150.2 71.2 L154.0 70.8 L158.9 70.8 L163.4 70.4 L167.7 70.9 L171.4 70.4 L175.4 71.1 L179.7 71.0 L184.3 69.0 L188.3 66.2 L191.1 64.5 L195.4 62.2 L199.1 59.9 Z"/><path d="M177.4 18.8 L173.0 25.7 L177.0 27.4 L179.4 30.7 L182.7 33.1 L185.5 35.8 L188.9 38.9 L191.6 41.7 L194.6 43.6 L198.0 47.0 L200.7 50.0 L204.3 51.9 L207.7 51.4 L212.7 49.0 L215.8 47.5 L220.2 45.6 L224.5 44.2 L228.2 43.6 L229.4 38.0 L231.0 33.1 L231.6 27.6 L227.6 27.0 L224.4 24.6 L220.3 24.0 L216.6 23.2 L213.2 21.0 L208.8 19.4 L205.1 18.7 L201.5 18.7 L195.0 18.5 L191.4 18.3 L186.4 18.7 L182.3 18.8 Z"/><path d="M301.8 12.5 L299.8 19.8 L305.0 23.1 L308.8 23.3 L312.6 25.1 L316.7 25.5 L321.6 25.3 L325.0 26.5 L330.3 26.3 L333.6 27.7 L338.0 28.6 L341.7 28.6 L345.6 29.9 L349.9 28.7 L354.2 30.1 L359.2 30.6 L362.5 31.6 L367.3 31.9 L371.1 32.8 L375.0 32.1 L379.5 31.2 L377.6 27.3 L375.2 24.5 L372.2 20.1 L369.7 16.9 L367.7 13.1 L365.4 9.0 L362.7 4.9 L360.5 1.9 L355.8 3.1 L352.1 2.3 L347.7 3.6 L344.0 6.0 L339.2 5.8 L335.2 6.7 L331.4 7.9 L326.6 8.8 L322.4 9.1 L319.1 10.1 L314.1 10.3 L310.2 11.4 L306.7 11.7 Z"/><path d="M297.1 20.1 L297.9 16.2 L299.9 12.1 L295.8 10.4 L291.8 6.6 L288.2 4.8 L285.5 1.8 L280.6 -1.1 L277.2 -1.3 L273.2 -0.4 L268.5 -0.7 L264.6 -0.3 L259.7 -0.5 L255.8 -1.3 L251.9 -1.0 L247.3 -1.6 L243.1 -0.4 L240.1 -0.7 L235.7 -1.2 L231.0 -0.9 L227.2 1.2 L224.3 4.0 L220.5 6.8 L217.4 9.6 L214.1 11.6 L210.8 14.2 L207.1 16.7 L212.1 18.6 L216.6 19.1 L220.3 21.0 L224.9 22.5 L229.0 24.4 L233.6 25.1 L238.1 25.6 L241.3 25.2 L245.2 25.0 L249.4 23.9 L253.4 23.6 L257.6 23.6 L261.5 23.0 L264.0 22.9 L268.7 22.6 L273.9 22.3 L277.3 21.8 L281.4 21.3 L285.2 20.8 L289.9 20.8 L293.8 20.4 Z"/><path d="M391.7 -0.9 L387.3 0.4 L382.6 -0.5 L378.4 -1.7 L373.9 -0.9 L370.0 -0.7 L364.8 -0.7 L362.7 0.6 L364.8 3.7 L367.0 7.9 L370.1 11.3 L371.6 14.8 L374.1 18.4 L376.3 21.1 L378.2 24.6 L380.4 28.0 L382.2 30.5 L387.0 30.7 L392.0 31.6 L396.1 32.1 L401.9 32.0 L407.0 32.9 L410.2 29.2 L415.3 25.7 L412.5 22.0 L409.0 18.6 L405.9 15.7 L402.7 12.0 L400.6 9.1 L397.5 5.2 L394.1 2.4 Z"/><path d="M301.8 10.5 L305.5 10.1 L308.8 9.2 L312.8 8.8 L317.3 7.6 L320.5 6.9 L324.6 6.4 L328.8 5.0 L333.2 4.9 L336.5 4.3 L340.5 2.9 L344.6 2.0 L348.3 1.5 L353.1 1.4 L356.3 0.7 L360.3 -0.6 L360.8 -0.7 L357.2 -0.7 L351.6 -0.3 L347.7 -0.9 L342.5 -0.4 L339.8 -0.5 L335.7 -0.1 L331.1 -0.4 L326.6 -1.0 L323.1 -0.7 L318.0 -0.7 L314.3 -1.1 L310.3 -1.0 L305.3 -1.3 L302.5 -1.4 L297.7 -0.6 L293.6 -1.3 L289.1 -0.8 L285.3 -1.1 L288.6 2.5 L293.6 5.1 L297.0 8.0 Z"/><path d="M472.8 2.8 L471.8 -0.3 L468.2 -0.4 L463.2 -0.5 L459.3 -1.0 L455.9 -0.8 L452.0 0.6 L447.9 -0.4 L443.2 -0.9 L439.1 -0.9 L435.1 -0.9 L431.4 -1.1 L426.9 -1.2 L423.6 -0.6 L419.8 -0.2 L415.2 -0.4 L410.7 0.3 L407.7 -0.7 L402.7 -0.5 L398.4 -1.0 L395.4 -0.6 L397.7 2.8 L400.3 5.7 L403.3 8.3 L406.5 11.3 L409.9 14.6 L412.7 17.5 L414.9 20.5 L417.0 24.2 L421.7 22.1 L425.8 20.8 L429.2 19.7 L433.3 17.4 L437.6 16.8 L440.7 14.7 L444.0 13.0 L448.8 11.9 L452.1 10.3 L457.0 8.9 L460.1 8.1 L464.4 6.1 L467.8 3.9 Z"/><path d="M286.7 53.3 L282.1 56.2 L279.1 59.5 L275.9 63.5 L273.4 67.2 L269.5 70.4 L273.5 70.9 L278.0 71.4 L281.9 71.4 L286.3 71.0 L289.5 70.5 L294.7 71.5 L298.6 71.3 L302.4 70.8 L306.4 71.4 L310.9 70.9 L314.7 71.2 L319.1 70.6 L323.7 71.1 L327.1 71.6 L326.7 63.2 L324.1 56.1 L319.3 55.1 L315.7 54.7 L311.1 54.6 L306.1 54.3 L302.3 54.1 L298.6 53.5 L293.9 52.6 L289.5 52.3 Z"/><path d="M328.8 62.1 L332.3 61.6 L337.5 62.1 L341.2 62.6 L345.4 62.1 L349.7 61.6 L354.6 62.0 L358.4 62.3 L363.2 62.7 L367.3 62.2 L371.6 62.4 L367.7 61.3 L363.5 60.2 L359.6 57.7 L355.4 55.6 L351.7 54.2 L346.7 52.3 L343.3 53.2 L339.1 53.3 L334.2 55.4 L330.6 55.0 L326.5 56.4 Z"/><path d="M429.4 44.7 L426.4 43.0 L422.0 41.8 L418.0 39.8 L414.9 37.2 L410.7 37.4 L406.5 34.7 L402.6 35.3 L397.8 34.4 L394.0 34.5 L390.1 34.4 L385.7 34.0 L381.5 33.5 L376.4 34.3 L370.7 35.6 L367.5 36.9 L364.4 39.8 L360.6 42.6 L356.9 45.3 L353.0 47.8 L350.5 49.4 L353.8 52.4 L357.5 53.5 L362.9 55.8 L367.0 58.1 L370.3 59.9 L374.7 62.1 L378.7 63.5 L382.5 65.5 L386.7 66.0 L390.0 68.0 L393.9 69.2 L397.7 70.7 L402.8 71.2 L407.3 71.7 L410.1 68.9 L413.3 64.7 L415.6 60.2 L418.6 58.2 L422.2 54.4 L425.1 51.6 L427.4 47.5 Z"/><path d="M303.8 25.0 L298.3 22.1 L293.2 22.5 L289.2 23.3 L285.3 23.9 L281.3 23.9 L276.9 24.0 L272.8 24.7 L268.0 24.9 L265.1 25.0 L259.7 25.1 L254.9 26.2 L251.3 26.2 L247.8 27.5 L242.4 27.3 L238.8 27.3 L234.5 27.5 L234.1 31.8 L232.8 36.0 L232.3 39.7 L231.3 44.2 L235.5 44.0 L239.1 44.5 L243.2 45.3 L247.8 45.0 L251.9 46.6 L256.1 46.6 L260.7 47.3 L263.8 47.7 L268.5 49.1 L273.1 49.4 L276.3 49.6 L280.6 50.4 L284.4 51.0 L288.8 50.3 L290.8 46.3 L292.1 42.8 L295.3 39.8 L296.7 36.2 L298.9 32.7 L301.3 28.2 Z"/><path d="M377.1 66.7 L373.8 65.8 L370.1 65.8 L365.4 66.5 L361.1 65.5 L357.8 65.0 L353.3 65.4 L350.3 64.8 L345.2 65.3 L341.2 64.4 L337.3 64.8 L333.2 65.1 L329.4 64.7 L329.7 70.1 L333.5 70.6 L337.4 70.6 L341.3 71.1 L346.5 70.4 L349.8 70.4 L354.2 70.7 L357.7 70.4 L361.7 70.1 L366.0 70.2 L369.9 70.6 L374.2 70.5 L378.2 70.2 L382.0 70.4 L385.8 70.6 L390.2 69.7 L385.9 68.4 L382.3 66.7 Z"/><path d="M324.0 54.4 L329.0 53.4 L333.3 52.3 L337.8 51.6 L342.1 50.3 L346.8 50.0 L350.5 46.9 L354.1 44.7 L357.7 42.2 L361.5 40.1 L364.2 36.9 L368.1 34.8 L363.5 33.4 L358.6 33.5 L355.5 33.1 L350.5 32.6 L346.6 31.7 L342.9 30.7 L338.3 29.5 L334.0 29.1 L330.4 29.2 L326.4 28.7 L321.6 28.1 L317.5 27.6 L313.6 26.4 L309.3 26.2 L305.0 26.0 L303.8 29.0 L301.0 31.8 L299.1 36.0 L296.2 39.8 L295.3 43.0 L292.9 46.4 L291.3 49.7 L295.1 51.6 L299.4 51.5 L303.5 51.4 L307.8 52.5 L311.6 53.0 L316.7 53.8 L319.7 53.5 Z"/><path d="M409.0 33.2 L412.6 35.0 L417.0 36.3 L420.5 38.1 L424.9 39.2 L428.2 41.2 L432.0 44.0 L436.2 43.8 L440.4 44.6 L445.4 44.3 L448.8 43.5 L454.1 44.0 L457.8 44.3 L462.0 44.1 L467.0 43.7 L471.3 43.4 L475.8 43.2 L481.1 42.8 L485.4 42.4 L488.6 42.2 L493.4 40.6 L497.3 38.7 L501.0 38.2 L505.6 36.5 L508.5 36.0 L512.3 35.0 L516.1 29.7 L511.9 25.7 L507.1 23.7 L503.7 21.7 L499.9 18.5 L496.4 17.6 L493.2 15.9 L488.8 13.2 L484.5 11.2 L480.6 9.2 L476.1 7.4 L473.2 6.4 L469.6 6.7 L465.5 8.0 L461.1 9.3 L458.0 11.8 L453.0 13.0 L449.8 14.8 L445.7 15.8 L441.3 17.7 L438.0 18.9 L433.2 21.2 L429.3 22.7 L425.8 24.2 L422.4 25.6 L418.1 26.5 L413.3 30.3 Z"/><path d="M513.0 22.9 L516.1 20.1 L520.2 19.2 L524.0 16.8 L527.6 15.0 L531.9 14.0 L536.2 11.6 L539.7 10.4 L543.4 8.3 L541.1 6.2 L537.3 3.6 L533.6 0.9 L530.3 -0.3 L526.8 -0.3 L522.0 -0.7 L517.2 -0.8 L513.4 -1.0 L509.2 -1.1 L503.8 -1.1 L499.6 -1.3 L496.4 -0.8 L491.7 -0.3 L487.9 -0.9 L483.6 -0.6 L478.8 -0.6 L473.9 -1.0 L474.5 3.4 L478.2 5.1 L482.5 7.6 L486.2 9.5 L489.5 10.8 L493.6 12.8 L497.0 15.5 L500.9 16.4 L505.0 19.4 L508.6 21.1 Z"/><path d="M624.7 32.3 L629.0 35.1 L632.2 35.4 L636.0 38.1 L640.4 37.0 L645.3 37.2 L649.6 36.1 L653.7 36.3 L658.7 35.1 L662.1 34.3 L667.2 33.8 L671.7 33.7 L677.6 31.6 L677.3 26.2 L676.5 22.6 L671.8 19.6 L668.3 17.9 L663.2 15.5 L659.4 14.6 L655.3 12.4 L651.3 13.0 L647.0 14.3 L643.8 17.5 L641.0 19.5 L637.9 22.4 L633.9 25.2 L630.5 27.9 L628.1 30.5 Z"/><path d="M697.0 54.0 L701.4 54.1 L704.9 54.5 L711.0 54.8 L714.3 54.1 L718.9 54.3 L723.4 54.7 L727.8 55.7 L724.0 52.0 L721.9 48.1 L719.3 45.4 L717.3 41.6 L714.7 39.8 L711.9 36.0 L707.6 35.1 L703.7 35.4 L699.7 36.0 L695.6 34.9 L691.9 33.9 L686.7 34.1 L682.8 34.2 L678.8 34.4 L675.1 35.6 L677.5 38.1 L681.0 40.1 L683.9 43.4 L686.9 46.4 L690.4 48.0 L693.1 50.7 Z"/><path d="M631.2 62.0 L631.2 58.9 L632.3 53.4 L633.0 49.5 L634.4 44.2 L635.1 40.0 L631.3 39.0 L626.7 36.3 L623.0 36.1 L619.0 35.7 L615.5 35.5 L610.8 35.9 L606.4 36.4 L602.9 36.3 L597.9 36.3 L594.2 37.0 L590.9 39.1 L587.2 42.3 L583.9 44.5 L580.8 46.5 L576.6 49.4 L573.9 51.7 L569.7 53.1 L572.6 56.7 L576.8 60.7 L579.3 63.9 L582.5 67.1 L585.3 70.6 L588.3 70.4 L593.7 70.4 L597.2 70.3 L601.1 71.0 L605.2 70.2 L608.1 70.3 L612.6 69.8 L617.7 70.9 L621.0 68.4 L626.2 65.2 Z"/><path d="M607.1 11.4 L610.7 11.6 L615.5 12.1 L619.8 11.6 L624.6 11.6 L628.6 12.5 L633.6 12.1 L637.5 11.6 L642.0 12.0 L646.2 11.9 L650.0 10.9 L654.0 10.5 L656.3 4.4 L658.1 -0.4 L658.0 -0.5 L654.3 -0.9 L650.0 -1.0 L645.2 -1.2 L641.2 -0.1 L636.8 -0.2 L633.7 -0.8 L628.9 -0.9 L624.7 -0.4 L620.5 -0.3 L616.8 -0.5 L612.2 -0.7 L608.0 -1.1 L607.4 5.3 L606.3 12.1 Z"/><path d="M556.9 9.4 L557.4 12.7 L557.1 17.5 L558.0 22.0 L557.7 25.0 L560.0 25.8 L563.9 24.1 L567.4 23.0 L571.9 20.6 L574.7 19.8 L578.6 17.8 L576.0 13.8 L571.8 10.9 L568.3 8.0 L563.5 8.8 Z"/><path d="M571.1 3.0 L573.3 -1.4 L569.4 -1.4 L564.4 -0.9 L560.3 -0.7 L556.6 -0.7 L551.9 -0.8 L547.9 -1.6 L543.3 -1.2 L538.4 -0.8 L534.4 -0.6 L538.9 1.0 L542.4 5.4 L546.8 7.9 L551.4 6.7 L555.9 7.4 L562.5 6.1 L567.8 5.8 Z"/><path d="M718.1 13.5 L713.9 14.0 L710.2 12.4 L706.1 11.0 L701.7 11.1 L698.0 9.7 L694.0 9.9 L689.3 8.5 L684.8 6.6 L681.5 6.5 L677.2 5.3 L672.9 5.0 L669.6 3.7 L664.2 3.4 L660.9 2.3 L658.8 7.1 L656.8 10.5 L660.3 11.9 L665.0 13.9 L669.6 15.4 L674.5 17.1 L677.8 19.5 L681.5 19.1 L686.3 18.3 L690.9 17.9 L694.3 17.0 L697.5 16.7 L702.1 16.3 L706.5 15.0 L709.8 14.7 L714.8 14.7 Z"/><path d="M643.6 14.4 L639.4 14.7 L634.9 14.6 L630.4 14.3 L627.2 16.0 L622.9 14.3 L618.1 14.6 L613.8 13.8 L610.5 13.6 L606.8 14.5 L599.2 16.9 L602.8 19.0 L607.5 22.2 L611.3 24.5 L614.9 27.0 L618.4 29.3 L623.5 32.2 L626.1 28.7 L630.2 26.7 L632.5 23.0 L636.5 20.8 L639.5 17.7 Z"/><path d="M632.7 62.8 L636.5 61.9 L640.2 61.0 L645.2 61.3 L648.6 60.1 L653.4 59.7 L656.9 59.5 L661.3 59.2 L665.6 57.9 L669.2 57.6 L672.8 56.7 L677.7 55.9 L681.8 56.1 L685.4 55.7 L689.6 55.4 L693.3 54.3 L691.6 53.9 L687.9 51.8 L683.2 51.0 L679.1 50.4 L675.8 48.7 L671.1 48.6 L666.2 47.5 L662.1 46.6 L658.5 45.0 L654.5 44.6 L650.3 43.9 L646.0 43.1 L641.8 41.9 L636.8 41.2 L636.6 46.1 L634.7 49.5 L635.1 53.4 L633.7 59.1 Z"/><path d="M461.1 47.6 L463.2 50.5 L465.9 52.8 L468.1 57.9 L471.6 61.4 L474.5 65.9 L476.6 69.7 L481.5 67.9 L484.5 66.9 L488.9 64.8 L493.1 63.4 L497.5 62.5 L501.7 61.0 L505.0 59.4 L502.5 56.3 L500.1 53.4 L495.6 51.0 L492.9 47.5 L489.4 44.7 L485.7 45.2 L481.1 45.4 L477.4 45.8 L471.7 45.4 L468.5 46.0 L464.8 46.8 Z"/><path d="M622.8 69.8 L626.6 70.4 L631.0 71.0 L634.5 71.3 L638.7 69.8 L642.0 71.3 L646.9 70.4 L650.7 70.2 L655.6 70.6 L659.8 70.6 L662.1 71.0 L667.0 70.6 L671.8 70.5 L675.7 70.6 L678.9 70.9 L683.0 71.1 L687.7 70.7 L691.6 70.9 L695.2 71.0 L699.3 70.9 L703.0 70.7 L707.6 70.3 L711.3 70.4 L715.8 70.4 L719.7 71.3 L723.7 70.0 L727.7 71.1 L731.5 71.1 L735.9 70.8 L739.6 70.4 L743.6 70.7 L748.0 70.8 L751.7 70.7 L748.4 67.3 L744.4 65.0 L741.1 62.5 L737.6 59.6 L730.7 58.2 L725.6 57.9 L721.5 58.4 L717.6 57.3 L713.5 57.2 L709.2 57.7 L705.1 57.2 L701.2 56.2 L697.2 56.7 L692.9 56.6 L688.8 57.7 L684.2 59.0 L680.7 58.5 L676.5 59.5 L672.8 59.9 L668.8 60.8 L663.8 60.6 L659.9 61.4 L656.8 62.1 L651.8 62.3 L648.6 62.8 L644.1 63.6 L639.4 64.4 L636.2 64.8 L631.7 64.9 L627.2 68.0 Z"/><path d="M605.9 -0.0 L601.0 -0.8 L597.0 -0.2 L592.8 -1.1 L588.9 -1.5 L584.8 -0.2 L580.7 -0.3 L576.7 -0.3 L574.3 2.6 L578.4 3.9 L583.3 5.6 L587.2 5.6 L591.0 6.8 L596.1 8.0 L599.8 8.5 L604.4 9.9 L604.6 4.6 Z"/><path d="M481.2 70.6 L483.2 70.4 L487.8 70.6 L491.9 70.4 L496.2 70.6 L499.4 70.5 L503.8 71.1 L508.1 70.7 L512.0 70.9 L516.8 70.5 L520.1 71.1 L523.6 70.9 L528.0 70.6 L532.2 71.2 L536.4 70.7 L532.0 70.4 L527.5 68.2 L524.3 66.8 L520.2 65.4 L516.2 64.5 L511.9 62.7 L507.9 61.1 L503.9 62.2 L500.2 64.7 L496.6 65.9 L491.5 67.3 L487.6 68.1 L484.7 69.0 Z"/><path d="M581.2 15.5 L586.6 16.3 L591.4 15.7 L596.9 16.1 L603.4 12.7 L598.9 11.3 L594.1 10.6 L590.0 9.4 L586.0 8.7 L581.6 6.8 L577.1 6.2 L572.1 5.1 L571.1 7.2 L573.9 9.5 L577.7 12.9 Z"/><path d="M642.5 40.4 L646.2 40.4 L649.9 41.8 L654.6 42.1 L658.8 43.5 L661.9 44.5 L666.8 45.0 L670.6 46.7 L675.5 47.7 L678.5 47.6 L683.5 48.3 L686.9 49.0 L684.8 47.4 L681.0 44.4 L677.5 41.4 L674.7 38.6 L671.7 35.9 L666.7 37.2 L662.9 37.4 L658.6 36.7 L654.8 37.6 L650.9 38.0 L645.5 39.2 Z"/><path d="M563.9 26.9 L567.4 27.1 L572.7 28.1 L577.1 29.4 L581.0 30.6 L585.1 32.2 L589.4 33.2 L594.6 34.5 L597.7 34.6 L602.8 34.4 L607.6 33.3 L611.7 33.9 L615.7 33.2 L618.9 32.6 L616.9 29.7 L612.1 28.1 L608.6 26.2 L603.8 23.2 L600.9 20.2 L596.7 19.0 L592.0 18.7 L585.2 18.7 L581.2 18.8 L576.8 22.0 L572.5 22.2 L568.4 24.4 Z"/><path d="M546.4 9.3 L542.9 12.1 L538.1 14.3 L533.9 15.4 L530.8 16.2 L526.7 18.9 L522.3 20.3 L518.4 22.1 L513.9 24.2 L517.9 29.5 L521.9 28.2 L526.4 28.1 L530.9 28.1 L534.6 27.3 L538.8 27.4 L543.2 26.5 L546.2 27.3 L551.5 26.2 L555.3 25.5 L554.8 21.5 L555.1 17.4 L554.7 13.4 L555.5 9.3 L550.8 8.8 Z"/><path d="M474.6 70.8 L471.6 67.3 L469.9 64.1 L467.3 60.4 L464.6 56.7 L461.7 53.5 L460.5 50.0 L457.6 46.1 L453.8 46.1 L449.4 46.4 L444.5 46.7 L440.7 46.2 L436.7 46.1 L432.2 46.2 L429.4 49.1 L426.5 51.6 L423.7 55.2 L421.2 59.0 L417.8 61.6 L414.8 64.3 L412.7 66.9 L409.4 71.0 L414.2 70.9 L417.9 71.8 L422.2 70.6 L426.9 71.2 L430.2 71.4 L434.4 71.2 L438.5 70.5 L442.8 71.0 L446.1 70.7 L450.9 70.8 L454.6 71.2 L458.7 70.3 L462.9 71.3 L467.0 71.6 L470.9 71.3 L475.4 70.8 Z"/><path d="M556.3 27.5 L551.6 28.0 L548.1 29.5 L544.2 29.8 L539.7 29.4 L534.8 29.8 L530.3 30.0 L527.5 30.6 L523.1 30.7 L517.9 31.0 L515.3 35.2 L520.3 35.8 L523.5 37.3 L527.5 38.2 L531.8 40.2 L535.9 40.9 L539.8 42.1 L544.2 43.7 L547.8 45.3 L551.8 46.4 L555.3 48.8 L560.2 49.6 L565.0 50.8 L568.4 52.2 L572.5 49.7 L575.9 46.8 L579.6 44.7 L582.5 41.5 L586.9 38.8 L590.0 36.6 L586.1 35.0 L581.9 33.2 L577.5 31.9 L572.9 31.3 L568.9 30.3 L564.5 29.9 L560.3 27.3 Z"/><path d="M508.5 59.2 L512.8 60.8 L516.4 61.2 L520.0 63.1 L524.8 64.6 L527.9 66.2 L531.8 67.0 L535.8 67.8 L540.0 69.9 L543.4 70.6 L547.9 71.6 L551.8 70.6 L556.6 70.4 L559.8 70.8 L564.8 70.9 L569.1 71.1 L573.6 70.8 L577.8 71.3 L582.7 71.4 L579.7 66.4 L576.1 64.2 L573.7 60.4 L571.3 57.8 L567.6 54.4 L563.8 52.8 L560.3 51.6 L555.6 50.2 L552.3 48.8 L548.9 47.5 L545.2 47.0 L540.3 45.4 L537.2 44.0 L532.4 42.8 L529.8 40.9 L525.3 40.2 L521.2 38.8 L517.2 38.1 L513.7 36.0 L509.8 37.3 L505.1 39.3 L501.0 40.8 L496.7 42.1 L492.3 43.7 L496.1 46.4 L499.0 50.0 L501.9 52.7 L505.4 55.4 Z"/><path d="M680.0 30.6 L683.6 31.7 L687.6 31.8 L691.9 32.7 L696.0 31.7 L699.6 32.1 L704.2 32.7 L708.6 33.0 L712.3 33.3 L716.0 31.6 L720.2 30.1 L723.5 27.4 L727.3 26.5 L730.5 24.5 L735.5 22.8 L738.7 22.0 L743.6 19.5 L747.4 18.4 L750.3 17.2 L745.6 16.1 L740.7 16.2 L735.9 16.1 L732.1 16.2 L726.8 16.7 L722.6 17.0 L718.8 17.1 L715.0 17.6 L710.9 17.7 L706.8 18.7 L703.0 18.5 L698.7 19.2 L695.0 20.0 L691.1 20.2 L687.1 20.4 L681.9 21.4 L678.5 21.5 L679.0 26.8 Z"/><path d="M662.9 -1.2 L666.1 0.4 L670.6 1.6 L674.6 2.9 L678.3 3.0 L682.9 3.7 L686.4 4.5 L690.3 5.1 L694.4 5.8 L698.8 6.7 L703.5 8.9 L707.2 9.0 L710.6 10.4 L714.9 11.0 L718.6 12.1 L722.6 12.6 L726.2 13.2 L731.3 13.2 L735.1 13.8 L739.4 13.9 L742.6 13.7 L748.0 12.9 L751.4 13.8 L755.7 13.3 L760.7 12.6 L765.1 11.7 L769.4 11.8 L773.8 9.7 L778.4 9.9 L782.2 9.7 L781.8 5.0 L782.3 0.1 L778.5 -1.1 L774.5 -0.4 L770.7 -0.1 L766.1 -0.4 L762.8 -0.7 L758.1 -0.9 L754.8 -0.2 L750.1 -1.1 L747.0 -1.2 L742.5 -0.9 L737.8 -0.5 L734.4 0.0 L731.3 -0.6 L726.8 -0.1 L722.2 -0.9 L719.1 -0.7 L714.4 -0.7 L710.4 -0.8 L706.7 -0.1 L702.2 -1.1 L698.4 -1.2 L694.1 -0.1 L691.3 -0.4 L685.9 -0.3 L681.5 -0.8 L679.0 -0.3 L673.8 -1.2 L670.7 -0.6 L666.1 -0.4 Z"/><path d="M740.9 59.0 L744.4 61.9 L748.7 65.4 L751.9 67.9 L756.2 70.6 L761.1 71.0 L764.7 70.6 L769.6 70.1 L774.2 70.7 L778.3 70.8 L783.4 70.7 L782.5 67.4 L782.5 62.4 L782.1 59.1 L782.8 54.8 L782.8 50.5 L782.4 46.3 L782.9 42.6 L783.3 38.2 L782.5 34.1 L783.2 30.0 L779.5 33.4 L775.6 35.5 L771.3 37.4 L768.0 40.0 L765.1 42.0 L762.0 44.8 L757.9 46.8 L754.0 49.2 L751.9 51.4 L747.7 53.8 L744.3 56.6 Z"/><path d="M738.0 57.0 L741.4 54.9 L744.9 53.1 L748.7 50.6 L751.8 48.2 L755.3 46.1 L758.7 43.7 L761.6 41.6 L766.3 39.0 L768.4 37.2 L772.3 33.1 L775.8 32.3 L779.5 30.2 L783.0 27.5 L782.0 21.8 L782.9 17.3 L782.4 11.6 L778.6 11.8 L773.3 13.2 L769.8 13.8 L764.4 14.7 L760.4 15.7 L756.5 16.3 L753.0 17.6 L749.2 20.0 L745.2 21.8 L741.0 23.3 L737.5 24.3 L733.5 26.1 L729.5 28.1 L726.3 29.6 L722.1 30.9 L718.2 33.6 L714.7 35.0 L717.0 37.9 L720.0 41.3 L722.4 45.6 L725.3 49.4 L728.0 52.4 L730.9 55.7 Z"/></g><g fill="url(#bred)" filter="url(#blur1)"><path d="M113.3 60.8 L109.7 60.1 L105.2 59.3 L101.7 58.7 L97.2 57.4 L92.4 57.1 L89.2 55.9 L84.9 55.4 L80.9 54.6 L76.3 54.0 L71.8 53.4 L68.2 53.1 L64.6 53.0 L59.1 51.4 L55.7 51.4 L53.7 56.3 L51.4 59.4 L50.5 64.5 L48.6 68.7 L52.4 68.1 L56.7 68.3 L60.1 68.9 L64.7 68.8 L68.3 68.4 L72.3 68.3 L76.8 68.4 L80.9 68.8 L85.6 68.1 L89.1 68.6 L92.7 68.1 L96.6 69.0 L100.7 68.7 L104.6 69.1 L108.7 67.8 L112.5 67.9 Z"/><path d="M60.2 20.1 L64.8 19.5 L69.4 20.7 L73.4 19.7 L77.5 19.8 L81.8 19.2 L87.2 19.2 L91.5 20.1 L95.5 19.7 L100.5 19.3 L103.9 18.7 L106.8 19.4 L104.8 14.9 L101.8 11.5 L100.0 8.1 L97.7 4.7 L95.2 1.0 L91.2 1.0 L87.1 1.8 L82.9 1.0 L77.7 1.2 L73.4 0.5 L70.3 1.3 L65.7 0.3 L61.4 0.8 L57.6 1.9 L53.2 0.7 L48.4 1.0 L51.1 4.4 L53.5 8.2 L56.3 12.8 L58.6 16.0 Z"/><path d="M13.4 68.8 L17.1 69.4 L21.3 69.6 L25.3 69.2 L29.6 68.7 L33.9 69.0 L38.0 69.0 L41.4 69.0 L43.7 64.8 L45.1 59.7 L46.6 55.3 L48.7 49.7 L44.2 49.8 L38.7 47.8 L34.2 46.6 L31.6 49.9 L28.2 53.6 L25.1 56.7 L22.1 59.1 L18.7 63.5 L16.3 66.0 Z"/><path d="M27.6 45.0 L22.6 42.6 L18.6 41.6 L14.4 42.0 L9.8 41.4 L5.3 40.7 L1.0 40.4 L1.1 44.2 L1.2 48.8 L1.0 52.6 L1.3 56.1 L1.3 60.9 L1.2 65.0 L0.8 68.8 L5.4 69.1 L8.1 65.3 L11.1 63.4 L14.1 60.0 L16.0 57.3 L19.4 52.9 L22.5 50.3 L24.7 47.7 Z"/><path d="M59.1 25.9 L55.6 27.9 L51.9 30.2 L47.3 32.0 L43.6 34.3 L39.5 35.6 L36.3 38.6 L32.6 39.6 L34.6 41.3 L39.2 41.4 L44.1 43.1 L48.5 43.3 L53.1 45.3 L57.8 45.3 L62.6 46.0 L66.8 46.2 L70.9 46.2 L75.3 47.2 L78.7 43.4 L81.5 40.6 L84.9 37.0 L87.2 34.5 L91.6 32.1 L93.5 29.0 L97.3 25.6 L92.3 26.2 L88.5 26.1 L84.0 26.6 L80.8 26.2 L76.2 25.2 L72.1 26.0 L67.9 26.4 L63.5 25.5 Z"/><path d="M23.0 35.6 L27.4 34.5 L31.1 32.8 L35.0 30.9 L39.1 29.2 L42.6 27.3 L45.7 25.3 L50.0 23.6 L53.4 22.3 L51.5 17.1 L48.3 13.4 L46.5 9.2 L44.1 5.2 L41.8 1.1 L37.6 1.8 L34.6 1.0 L29.3 1.0 L25.8 0.9 L21.3 1.3 L17.1 1.0 L13.2 0.5 L8.8 1.2 L5.4 1.3 L0.7 1.2 L1.7 5.7 L1.3 9.2 L1.6 13.4 L0.9 17.5 L1.9 22.0 L1.8 25.8 L1.7 29.8 L1.3 35.2 L6.1 34.4 L10.1 35.2 L15.0 35.3 L18.2 35.9 Z"/><path d="M114.6 22.7 L117.9 25.9 L120.9 28.7 L124.5 31.8 L127.6 34.6 L131.7 37.8 L134.9 41.1 L138.2 44.5 L141.1 41.7 L144.8 39.9 L149.1 36.1 L151.5 34.9 L155.7 32.7 L158.8 30.4 L162.6 28.0 L166.2 24.9 L169.5 23.1 L171.5 20.7 L166.7 21.1 L162.6 20.7 L158.3 21.3 L155.1 21.8 L150.8 22.0 L146.8 21.7 L143.0 22.3 L138.5 21.9 L134.6 22.2 L130.2 22.8 L126.3 22.7 L122.1 22.8 L118.6 22.7 Z"/><path d="M140.7 49.7 L139.9 49.4 L144.5 49.2 L149.4 49.0 L152.6 50.0 L157.2 50.3 L161.7 50.3 L166.3 49.6 L170.2 50.3 L174.5 50.8 L178.4 50.6 L183.3 51.1 L187.0 51.9 L192.5 50.7 L196.0 52.4 L193.1 48.7 L189.6 45.7 L186.5 43.0 L183.8 40.3 L180.2 37.3 L177.3 34.7 L174.1 32.8 L171.2 29.8 L167.8 31.8 L164.2 33.9 L161.2 35.7 L158.0 38.4 L153.7 40.3 L150.3 42.8 L146.9 45.4 L143.5 46.2 Z"/><path d="M208.6 55.7 L210.9 57.2 L214.5 59.0 L219.2 61.4 L221.6 63.5 L226.3 65.0 L229.1 66.9 L233.1 69.2 L237.6 69.4 L241.7 69.4 L245.7 68.3 L249.5 69.0 L253.6 69.3 L257.7 68.5 L262.6 69.2 L266.3 69.3 L269.8 65.4 L271.6 61.3 L275.6 57.6 L279.0 54.8 L274.7 53.3 L271.7 53.0 L266.3 52.7 L262.9 51.8 L259.0 51.3 L254.2 51.0 L250.9 50.1 L246.6 49.7 L243.6 48.9 L238.9 48.6 L234.3 48.4 L230.6 48.0 L225.9 48.9 L221.1 51.0 L217.1 53.0 L212.5 54.5 Z"/><path d="M205.8 61.4 L200.9 63.9 L195.8 66.8 L191.4 68.7 L196.6 69.1 L201.2 68.9 L205.3 68.3 L210.2 68.5 L214.2 68.3 L219.0 68.1 L215.1 66.2 L212.0 65.1 L209.1 62.4 Z"/><path d="M112.3 16.5 L116.4 16.5 L120.6 16.4 L125.2 15.7 L128.7 15.7 L133.3 16.6 L137.4 15.6 L141.7 15.0 L145.7 15.2 L148.0 16.4 L153.8 14.7 L157.2 14.9 L161.2 14.3 L164.9 14.9 L169.3 15.0 L165.8 12.2 L162.0 8.1 L158.0 4.2 L155.8 1.0 L151.5 1.3 L146.9 1.2 L143.0 1.2 L139.5 1.6 L135.0 1.0 L131.3 1.3 L127.6 2.4 L123.5 1.3 L119.1 1.0 L114.8 1.0 L111.0 1.2 L107.4 1.2 L103.0 0.9 L106.2 5.4 L108.8 9.4 L111.1 12.8 Z"/><path d="M177.7 14.0 L183.0 14.3 L187.1 14.9 L191.5 14.4 L196.5 14.6 L199.7 14.6 L204.4 13.9 L207.8 11.5 L210.5 8.9 L214.7 6.1 L217.7 3.5 L221.9 1.0 L217.3 1.2 L213.1 0.8 L210.0 0.7 L205.1 1.4 L201.1 0.8 L197.2 1.4 L192.0 0.6 L188.4 0.5 L184.3 0.6 L180.7 0.6 L176.5 1.1 L172.0 1.0 L168.8 1.1 L163.8 0.9 L167.2 4.4 L171.5 7.4 L174.7 11.6 Z"/><path d="M134.0 48.4 L131.4 45.4 L128.0 42.4 L124.7 39.9 L120.8 37.1 L117.6 33.6 L113.8 30.5 L111.1 27.2 L107.7 24.9 L106.0 24.1 L102.9 28.2 L99.8 30.9 L96.3 34.0 L94.1 37.0 L90.7 39.8 L88.5 42.8 L85.3 45.1 L83.7 47.9 L86.8 49.0 L91.0 50.5 L96.3 50.6 L99.2 52.3 L104.6 53.0 L108.9 53.2 L112.7 53.9 L116.5 55.7 L120.9 55.0 L125.4 52.6 L129.9 52.4 L133.9 49.9 Z"/><path d="M198.9 57.8 L194.7 57.6 L190.4 57.4 L186.6 57.0 L182.7 57.0 L178.3 56.9 L173.6 57.6 L169.5 56.2 L165.2 56.5 L162.2 56.5 L157.5 55.9 L153.2 56.5 L149.6 55.8 L145.0 56.1 L140.2 55.8 L136.3 54.8 L132.6 57.2 L128.0 57.7 L124.6 59.5 L120.3 61.2 L119.3 65.2 L119.0 69.0 L123.1 69.0 L127.6 69.1 L131.1 68.9 L135.3 68.7 L139.0 69.0 L143.0 69.0 L147.0 69.8 L151.9 69.2 L155.3 69.9 L159.5 69.0 L163.5 69.2 L168.0 69.0 L172.3 68.7 L175.8 68.6 L180.3 68.9 L183.3 67.1 L187.7 64.0 L190.8 61.6 L194.8 59.8 Z"/><path d="M178.3 21.1 L175.6 24.9 L178.4 27.6 L182.4 30.0 L185.3 33.8 L188.3 36.3 L191.2 39.5 L195.2 41.9 L197.2 44.2 L201.5 48.0 L204.4 50.6 L207.8 48.7 L211.8 47.5 L215.0 46.4 L220.0 44.1 L222.7 43.3 L226.8 40.9 L228.2 37.6 L228.5 34.0 L229.6 28.6 L225.5 27.1 L221.0 26.2 L216.9 24.5 L213.6 23.7 L209.1 22.2 L204.9 21.1 L200.3 21.3 L195.6 20.5 L191.1 20.5 L187.5 21.3 L182.7 20.8 Z"/><path d="M303.7 14.9 L302.3 19.7 L306.1 21.5 L309.9 22.1 L314.4 21.7 L318.3 22.9 L321.7 23.2 L325.2 24.1 L329.7 25.0 L333.5 26.0 L338.2 25.9 L341.9 26.2 L345.8 26.9 L350.4 27.6 L353.9 28.2 L358.2 28.9 L363.4 29.7 L366.6 29.4 L370.2 30.0 L376.5 29.7 L373.8 26.1 L371.4 23.1 L368.7 18.7 L366.2 15.5 L363.7 10.9 L361.1 7.1 L359.4 4.9 L354.9 5.1 L351.4 5.0 L347.2 6.1 L343.1 7.7 L338.6 7.9 L335.5 8.3 L331.5 9.6 L327.5 10.2 L323.7 10.0 L320.0 12.5 L315.9 12.8 L310.9 13.1 L307.2 13.7 Z"/><path d="M296.0 18.3 L297.8 13.4 L294.3 10.4 L290.4 8.9 L287.1 5.7 L284.4 3.8 L280.5 0.8 L277.2 1.1 L272.4 0.9 L267.6 0.4 L264.3 1.1 L259.9 0.5 L255.4 0.8 L251.3 1.3 L248.3 2.1 L244.2 0.7 L239.4 -0.4 L235.5 0.9 L232.1 1.2 L228.5 3.6 L225.2 6.6 L221.1 8.4 L217.6 11.7 L215.3 13.9 L210.9 16.3 L215.8 17.7 L220.3 19.4 L224.7 21.0 L229.4 22.0 L233.7 23.5 L238.3 23.2 L242.2 22.8 L245.6 22.9 L250.0 22.5 L254.7 21.2 L258.3 21.3 L262.5 20.7 L267.3 20.7 L271.3 20.3 L275.4 19.8 L279.4 20.0 L283.6 19.2 L287.3 19.1 L292.0 18.6 Z"/><path d="M390.6 1.0 L386.8 1.2 L382.3 1.3 L378.4 1.1 L374.4 1.5 L369.8 1.3 L365.8 1.7 L365.7 1.6 L368.0 5.0 L370.4 8.4 L371.3 12.5 L374.5 15.0 L376.6 18.6 L379.8 22.6 L380.6 26.2 L383.4 30.2 L387.5 28.7 L392.4 29.6 L396.7 29.1 L401.4 30.7 L404.9 30.7 L408.8 28.7 L412.5 25.2 L410.0 22.5 L406.6 19.5 L404.0 15.5 L402.3 13.1 L398.5 10.4 L395.4 6.7 L393.1 4.1 Z"/><path d="M301.8 9.0 L305.6 7.8 L310.4 6.5 L314.9 6.1 L319.0 5.4 L322.9 4.4 L328.0 3.7 L332.6 2.3 L335.9 2.0 L341.0 1.9 L336.9 0.7 L332.9 0.8 L327.8 2.1 L324.4 1.4 L320.3 1.8 L316.0 1.6 L311.4 0.5 L308.2 1.7 L303.7 1.2 L299.4 0.8 L295.8 1.4 L291.2 1.2 L295.0 3.8 L298.5 5.7 Z"/><path d="M469.6 1.5 L469.9 1.4 L466.1 1.3 L461.8 0.8 L456.7 1.0 L453.0 1.0 L449.1 0.7 L444.6 1.2 L441.0 1.0 L437.0 1.2 L432.2 1.3 L429.2 1.0 L424.8 1.8 L420.8 0.9 L416.8 1.3 L411.8 1.2 L407.9 1.3 L403.5 1.8 L399.1 0.8 L402.8 5.0 L406.0 7.7 L409.1 11.7 L412.5 14.5 L415.0 18.3 L417.4 21.6 L422.5 20.1 L425.7 19.1 L430.4 17.6 L433.7 15.6 L438.4 13.9 L441.7 12.9 L446.7 10.6 L449.0 8.9 L453.6 7.9 L458.3 6.3 L461.7 4.9 L465.6 3.3 Z"/><path d="M286.4 54.7 L283.5 58.4 L280.5 61.7 L276.9 65.8 L273.4 68.8 L278.9 68.0 L282.3 69.3 L286.1 70.1 L290.0 69.6 L295.9 69.4 L299.4 69.2 L303.4 69.4 L307.6 69.0 L312.7 68.6 L316.4 69.1 L320.2 69.5 L325.1 68.5 L324.4 63.3 L322.2 58.3 L318.0 58.1 L313.9 57.6 L310.0 57.1 L305.7 56.0 L301.3 55.9 L298.0 56.1 L293.9 54.8 L289.2 54.3 Z"/><path d="M328.9 58.9 L333.0 60.1 L337.7 60.0 L341.9 60.5 L345.1 60.2 L349.7 60.0 L353.8 60.5 L358.0 60.1 L362.0 61.7 L358.0 58.4 L354.7 57.6 L351.0 55.2 L347.4 53.6 L342.0 54.7 L337.9 56.2 L333.7 56.9 L329.3 58.0 Z"/><path d="M426.9 45.9 L423.0 44.2 L418.1 42.6 L414.6 40.6 L410.6 38.9 L406.0 36.0 L401.4 37.0 L398.2 36.3 L393.7 36.2 L389.9 35.9 L385.6 36.7 L381.9 35.5 L376.3 35.9 L372.1 37.1 L368.1 39.4 L364.4 41.6 L361.3 44.8 L358.1 47.0 L353.4 50.3 L357.0 51.1 L360.5 53.4 L364.7 55.0 L368.6 57.1 L372.0 58.4 L375.5 60.3 L379.6 61.8 L383.3 63.0 L386.4 64.2 L391.1 66.2 L395.2 67.5 L398.8 69.5 L406.8 68.7 L409.3 65.7 L411.9 62.6 L415.6 58.9 L418.9 55.7 L420.9 52.5 L423.6 49.5 Z"/><path d="M300.8 25.2 L297.3 23.5 L293.6 24.4 L289.4 24.6 L285.9 25.0 L280.9 26.0 L277.6 26.0 L272.2 25.9 L269.1 26.5 L265.3 26.3 L260.9 27.0 L257.0 27.5 L252.8 27.7 L247.7 27.8 L243.9 28.2 L240.5 29.5 L236.0 28.9 L235.0 33.2 L234.8 37.8 L233.6 41.7 L236.5 42.1 L240.9 43.1 L245.3 43.2 L249.1 44.7 L252.9 44.3 L257.1 44.9 L261.0 46.0 L265.8 45.6 L269.1 46.9 L273.1 47.3 L276.9 48.4 L280.9 48.5 L285.0 49.1 L287.3 49.0 L289.5 44.9 L291.7 40.5 L293.6 36.7 L296.2 33.0 L297.9 29.5 Z"/><path d="M377.0 67.2 L373.9 67.3 L369.1 67.4 L364.1 67.4 L360.8 67.3 L356.7 67.1 L352.1 67.0 L348.1 67.8 L343.9 66.9 L339.3 66.4 L335.9 66.2 L330.7 66.4 L331.1 69.4 L334.3 68.8 L339.6 68.2 L343.0 68.8 L348.0 68.3 L350.7 69.0 L355.9 68.5 L358.4 69.2 L363.2 69.1 L367.3 68.5 L371.2 69.2 L375.9 67.8 L379.0 69.3 Z"/><path d="M323.8 52.9 L329.0 51.8 L332.8 50.1 L337.5 49.7 L341.4 48.7 L346.4 47.8 L349.0 44.5 L352.7 43.0 L356.0 40.4 L359.2 38.4 L362.7 35.8 L358.3 34.9 L354.7 34.2 L350.1 33.9 L347.1 33.5 L343.1 32.8 L338.4 31.7 L334.2 32.3 L330.6 31.4 L326.7 30.6 L322.3 30.0 L318.6 29.6 L314.4 28.9 L309.9 28.1 L305.8 28.1 L303.3 31.1 L303.1 34.6 L299.7 38.2 L298.6 41.7 L296.4 45.3 L294.0 50.0 L298.5 49.1 L302.6 50.0 L307.3 50.7 L311.5 50.3 L316.0 51.3 L320.0 51.4 Z"/><path d="M413.6 33.4 L417.9 34.7 L420.9 36.8 L424.8 38.2 L428.3 40.4 L432.2 41.9 L436.3 42.3 L440.6 42.2 L444.6 41.8 L449.9 41.7 L453.7 42.0 L457.0 42.4 L462.6 41.5 L467.1 41.3 L471.0 41.3 L475.6 41.8 L479.7 40.9 L485.2 39.5 L488.7 40.2 L493.6 38.6 L498.7 36.8 L502.2 34.4 L507.2 33.6 L511.7 32.6 L513.0 30.8 L510.8 26.9 L506.1 24.5 L502.7 22.6 L498.7 21.0 L495.5 19.1 L491.5 17.5 L488.1 14.0 L484.0 13.2 L481.0 11.2 L476.8 9.1 L473.4 7.3 L469.0 8.7 L465.6 10.3 L460.8 12.2 L457.3 13.6 L453.8 15.5 L450.2 16.3 L445.9 17.5 L442.7 19.7 L438.7 20.9 L433.4 23.1 L430.4 24.1 L426.5 25.8 L422.8 26.4 L419.1 28.3 Z"/><path d="M512.2 20.3 L516.0 18.6 L520.9 16.5 L524.8 14.7 L527.9 13.7 L532.2 11.7 L535.1 10.0 L539.3 9.1 L536.3 5.8 L532.6 3.3 L529.2 1.6 L525.5 1.4 L521.2 1.0 L517.9 0.8 L512.6 1.3 L508.8 1.0 L505.5 0.8 L501.4 0.9 L497.5 1.7 L492.6 1.1 L488.4 1.2 L485.1 0.6 L480.9 0.6 L476.1 0.4 L477.3 2.0 L480.1 3.6 L484.1 4.8 L487.2 8.4 L490.7 9.4 L494.7 10.9 L498.0 13.5 L501.7 15.1 L505.1 16.9 L508.8 19.2 Z"/><path d="M628.7 32.5 L632.6 33.6 L636.7 35.4 L640.8 35.2 L645.4 34.1 L648.9 34.1 L654.0 33.9 L658.5 33.7 L662.6 32.7 L666.2 31.8 L670.7 31.8 L675.5 30.1 L674.8 23.2 L670.9 21.4 L666.9 19.3 L662.3 18.0 L658.9 16.0 L654.5 15.3 L647.5 16.2 L644.7 18.5 L641.4 22.5 L638.5 24.7 L635.2 27.2 L632.1 29.9 Z"/><path d="M697.8 51.4 L702.2 52.1 L706.5 52.1 L709.8 53.1 L714.6 53.2 L719.2 53.1 L724.0 53.2 L720.7 48.6 L717.3 45.2 L713.8 41.5 L710.9 38.3 L705.5 37.4 L701.4 37.5 L697.1 37.0 L692.6 36.8 L688.6 36.0 L683.8 35.3 L679.4 36.0 L678.0 36.4 L680.6 37.9 L684.1 41.2 L687.8 44.0 L691.0 47.1 L694.0 49.0 Z"/><path d="M628.9 61.1 L629.0 57.0 L629.8 53.9 L630.5 48.9 L631.5 45.3 L632.5 41.5 L627.3 38.7 L622.3 37.3 L617.5 37.7 L614.0 37.6 L608.6 38.7 L603.7 38.1 L598.9 38.9 L594.9 39.0 L591.2 42.0 L587.9 43.5 L584.0 46.6 L580.7 49.0 L576.6 51.4 L572.6 54.0 L576.2 57.9 L579.2 61.2 L582.4 64.6 L586.3 68.5 L590.6 68.2 L594.8 68.0 L599.0 68.5 L603.9 68.7 L608.0 69.0 L612.6 68.9 L617.2 68.6 L620.7 66.5 L624.5 64.2 Z"/><path d="M608.3 9.3 L613.0 8.9 L616.7 9.2 L620.7 9.8 L625.4 10.3 L629.7 10.4 L633.7 9.8 L638.1 9.9 L641.5 10.7 L646.2 10.3 L652.8 8.7 L655.4 1.2 L651.2 1.3 L647.2 1.8 L643.5 0.9 L639.1 0.7 L634.9 1.4 L630.8 0.4 L626.3 1.4 L622.4 1.7 L617.5 1.4 L613.6 1.3 L609.8 1.5 L608.9 5.5 Z"/><path d="M559.3 11.3 L559.2 15.0 L560.2 19.1 L559.1 23.7 L559.2 22.8 L563.9 21.6 L567.2 20.1 L571.0 18.1 L575.4 17.8 L571.7 13.7 L566.9 9.9 L562.9 10.7 Z"/><path d="M569.0 1.6 L570.7 1.9 L565.9 1.8 L561.5 0.8 L556.6 1.5 L553.1 2.0 L549.2 1.2 L544.1 1.7 L540.5 1.0 L546.1 5.8 L552.0 5.1 L556.2 5.4 L562.0 4.6 L567.8 3.8 Z"/><path d="M706.7 13.5 L703.2 12.9 L698.8 11.4 L695.1 11.4 L690.7 10.9 L686.3 9.4 L682.6 8.8 L678.1 7.8 L673.9 7.1 L670.3 6.0 L666.6 4.5 L661.7 4.9 L659.1 8.7 L663.7 11.2 L666.4 12.9 L670.3 13.6 L674.4 15.6 L677.9 17.3 L682.0 16.9 L686.5 16.7 L690.4 15.4 L694.1 15.3 L699.3 15.3 L702.6 14.8 Z"/><path d="M638.0 17.3 L633.8 16.3 L629.0 16.7 L624.9 15.8 L620.2 15.6 L615.3 15.5 L610.6 15.7 L606.2 16.1 L603.8 17.3 L606.9 20.1 L610.4 21.4 L615.3 24.8 L619.3 26.9 L622.2 29.2 L626.0 26.5 L628.6 23.6 L631.5 21.9 L635.2 18.5 Z"/><path d="M635.9 60.0 L640.0 60.2 L643.9 59.3 L647.8 58.3 L651.7 58.4 L656.1 58.3 L660.0 56.0 L664.1 56.5 L668.6 55.9 L672.2 55.9 L676.4 55.0 L680.7 53.7 L685.5 52.6 L680.4 52.8 L676.4 52.0 L672.3 50.6 L669.0 49.7 L663.8 48.5 L659.4 48.2 L655.7 47.0 L651.0 46.3 L646.4 45.0 L642.8 43.9 L638.7 43.0 L637.5 48.2 L637.3 52.3 L636.2 56.4 Z"/><path d="M464.4 48.3 L466.8 52.7 L469.2 55.9 L472.7 59.6 L474.0 63.3 L477.3 66.8 L481.9 65.7 L485.4 64.5 L489.7 62.8 L493.7 61.5 L497.5 59.8 L501.7 58.3 L497.9 56.1 L495.1 52.6 L491.9 49.6 L488.8 46.6 L484.3 47.2 L480.3 47.5 L475.7 47.0 L472.7 47.7 L468.0 48.2 Z"/><path d="M629.8 68.8 L634.5 69.3 L637.5 68.5 L642.5 68.6 L646.3 69.4 L649.6 68.6 L653.8 68.4 L657.4 68.6 L662.2 68.6 L665.8 68.6 L669.3 69.3 L673.0 68.5 L678.1 68.2 L682.2 69.3 L685.6 68.8 L689.5 69.0 L694.0 68.8 L698.5 68.9 L702.5 69.0 L705.5 68.9 L710.2 68.2 L714.6 68.8 L718.2 68.4 L722.1 68.9 L726.0 68.8 L729.2 69.3 L733.7 67.9 L737.7 68.4 L742.4 68.4 L746.3 68.4 L742.4 65.4 L737.6 61.3 L730.5 59.6 L726.2 60.1 L721.2 59.1 L717.1 58.8 L713.1 58.8 L708.6 59.0 L705.2 58.2 L700.6 58.5 L696.5 58.0 L693.0 59.2 L688.9 59.3 L685.4 60.6 L680.5 60.4 L677.1 60.7 L672.8 61.6 L668.4 62.0 L664.0 62.4 L659.9 64.1 L657.3 64.2 L652.8 64.7 L649.2 65.2 L645.1 65.0 L640.9 65.7 L636.2 66.0 L632.9 67.4 Z"/><path d="M603.8 1.2 L599.5 1.8 L594.6 1.6 L590.3 0.9 L586.0 0.9 L582.0 1.3 L577.8 1.6 L576.0 1.8 L580.7 2.7 L585.3 3.7 L590.4 3.9 L594.1 5.5 L597.5 6.8 L602.4 7.3 Z"/><path d="M491.8 69.0 L495.5 68.5 L499.9 68.7 L504.2 69.4 L507.4 68.7 L511.9 68.4 L515.7 68.9 L520.2 68.2 L524.2 69.1 L519.8 67.1 L516.8 66.6 L511.4 64.1 L508.1 62.8 L503.7 64.5 L499.9 65.1 L494.7 67.0 Z"/><path d="M575.3 7.3 L577.6 11.0 L582.0 14.3 L587.0 14.9 L591.3 13.7 L595.5 13.8 L597.8 13.0 L593.4 12.1 L589.0 11.2 L583.4 9.7 L578.6 8.2 Z"/><path d="M653.5 40.2 L657.3 41.5 L661.7 42.0 L666.4 43.0 L671.5 43.9 L675.9 45.4 L679.4 45.7 L676.8 43.2 L673.9 40.0 L670.9 38.4 L666.2 38.1 L662.0 38.9 L657.9 39.6 Z"/><path d="M569.6 25.9 L574.1 27.1 L577.3 28.1 L582.0 29.1 L586.3 30.7 L589.5 31.6 L594.7 33.2 L597.9 32.7 L601.7 31.5 L606.2 31.9 L610.2 31.6 L614.2 31.1 L610.7 29.4 L606.9 27.2 L602.6 24.3 L600.3 23.1 L596.3 20.2 L590.8 20.6 L586.7 20.0 L581.7 21.0 L577.7 22.1 L573.9 23.6 Z"/><path d="M546.7 11.6 L542.7 12.6 L539.6 14.7 L536.0 16.5 L532.4 18.2 L527.9 20.0 L524.7 22.0 L520.9 23.2 L517.8 25.5 L519.4 27.3 L523.6 26.8 L528.0 26.3 L532.0 25.8 L537.2 25.4 L540.4 24.9 L544.7 24.8 L548.6 23.5 L553.4 23.3 L553.4 19.9 L553.8 16.3 L553.5 11.3 Z"/><path d="M472.0 69.8 L469.2 66.3 L466.7 61.8 L464.3 58.9 L461.6 55.3 L459.5 52.0 L456.2 48.6 L452.1 48.0 L447.0 48.0 L442.2 48.2 L438.2 48.8 L433.7 48.3 L431.0 51.5 L427.7 54.2 L425.2 56.9 L422.2 59.8 L419.6 62.5 L417.2 66.0 L414.4 69.2 L418.7 68.8 L422.4 68.4 L425.7 68.3 L431.2 68.3 L434.9 69.6 L438.6 69.7 L443.6 69.4 L447.9 69.3 L450.7 69.3 L454.9 68.5 L458.6 70.0 L463.0 69.1 L467.0 69.1 Z"/><path d="M556.3 29.6 L552.4 30.0 L548.0 31.2 L544.2 30.8 L539.9 31.2 L536.5 31.8 L532.2 30.7 L527.8 32.8 L524.3 32.7 L518.7 33.3 L518.5 33.1 L522.6 35.6 L527.4 36.8 L530.6 38.9 L534.7 39.2 L538.7 41.1 L543.5 42.3 L547.5 43.3 L551.6 43.9 L556.0 46.4 L559.6 47.3 L563.9 49.3 L568.1 50.1 L571.4 46.8 L575.1 44.9 L578.9 42.3 L583.0 39.8 L586.5 37.3 L582.1 35.8 L577.8 33.9 L573.7 32.9 L569.1 32.2 L564.8 31.0 L559.6 30.2 Z"/><path d="M509.0 57.8 L512.7 59.3 L517.0 60.2 L521.0 61.5 L524.6 62.5 L528.5 64.4 L532.8 65.7 L536.3 66.5 L539.3 68.1 L544.1 69.0 L548.4 69.6 L552.4 69.5 L556.8 68.4 L560.8 69.0 L565.5 68.8 L569.4 68.7 L573.8 69.1 L578.5 69.4 L575.4 65.9 L572.5 62.6 L570.2 58.3 L566.7 56.1 L563.4 54.3 L559.3 53.8 L555.2 51.5 L551.4 50.5 L548.0 49.4 L544.6 48.5 L539.8 47.0 L535.9 46.1 L533.1 44.6 L529.1 43.0 L525.0 43.1 L520.5 41.4 L517.7 38.9 L512.9 38.0 L509.4 39.7 L504.4 41.7 L500.1 43.0 L495.4 44.8 L498.7 48.3 L502.4 50.6 L506.3 54.4 Z"/><path d="M681.1 29.4 L685.7 29.1 L689.6 30.1 L694.7 30.5 L699.6 30.5 L703.3 30.7 L707.6 30.9 L711.5 32.1 L714.8 29.7 L719.5 28.0 L722.7 26.2 L726.6 24.2 L730.5 22.8 L734.1 21.6 L737.6 19.9 L741.5 18.2 L736.9 18.1 L731.5 17.7 L726.6 18.0 L723.1 18.9 L718.4 19.0 L713.8 18.6 L710.0 19.7 L705.5 19.8 L702.2 20.7 L697.1 22.4 L693.7 21.9 L689.7 22.2 L685.9 22.4 L680.6 23.5 Z"/><path d="M679.9 0.6 L684.3 1.9 L687.5 2.5 L692.0 3.6 L696.0 4.6 L700.1 5.4 L703.4 5.6 L707.1 7.6 L712.7 7.6 L715.0 9.1 L719.5 9.5 L723.3 10.0 L727.0 11.9 L731.9 11.5 L735.3 11.7 L739.9 11.7 L743.3 11.7 L748.1 11.3 L751.3 11.8 L756.1 12.0 L760.1 10.7 L764.0 9.8 L767.9 9.3 L772.2 9.3 L776.0 8.2 L780.4 8.1 L780.7 1.2 L776.9 1.4 L772.4 1.9 L768.8 2.0 L765.0 1.6 L760.6 0.9 L756.8 1.4 L752.7 1.3 L748.2 0.9 L744.7 1.9 L740.3 1.5 L736.9 1.0 L732.2 0.9 L728.8 1.4 L724.2 0.7 L720.2 1.7 L716.2 1.2 L712.5 0.9 L708.3 1.6 L703.9 1.0 L700.3 1.3 L696.1 1.4 L692.3 1.0 L687.9 1.5 L684.6 1.9 Z"/><path d="M743.7 58.1 L746.8 61.8 L750.2 64.1 L753.4 65.6 L757.1 68.9 L761.4 68.6 L766.6 68.6 L771.4 68.7 L775.1 68.7 L780.6 68.5 L781.0 64.3 L781.0 60.5 L780.9 55.2 L780.5 51.8 L780.7 46.8 L780.8 42.9 L780.9 38.6 L780.5 33.9 L777.3 36.3 L773.2 38.5 L770.2 41.4 L767.9 43.7 L764.3 45.1 L761.0 47.5 L757.5 49.5 L753.6 52.3 L751.2 54.3 L748.0 57.7 Z"/><path d="M737.3 55.3 L741.2 52.7 L745.1 51.1 L748.2 48.4 L752.1 45.7 L756.5 42.4 L759.0 40.1 L762.7 38.4 L768.0 36.2 L770.8 34.1 L773.5 31.4 L777.9 28.9 L781.0 26.6 L780.3 22.0 L781.0 18.4 L780.5 13.9 L776.9 14.7 L773.2 15.4 L769.1 15.5 L764.6 16.8 L760.4 17.4 L756.8 17.7 L753.4 19.5 L748.8 21.2 L745.2 24.4 L740.4 25.0 L737.2 27.2 L733.1 27.6 L729.8 29.9 L725.3 31.5 L720.9 33.6 L717.7 35.9 L720.2 39.5 L723.3 43.0 L726.5 46.9 L729.2 50.2 L732.5 54.0 Z"/></g></g>
<rect x="0.5" y="0.5" width="781" height="69" fill="none" stroke="#000" stroke-width="1"/>
</svg>
<div class=a style="left:11px;top:251px;width:221px;height:31px;background:linear-gradient(#fff,#fff 80%,#f4f4f4)"></div>
<div class=a style="left:40px;top:281px;width:183px;height:2px;background:#6e6e6e;box-shadow:0 1px 2px rgba(0,0,0,.2)"></div>
<div class=a style="left:11px;top:281px;width:30px;height:2px;background:linear-gradient(to right,#bbb,#888)"></div>
<div class=a style="left:232px;top:256px;width:561px;height:26px;border:1px solid #000;background:linear-gradient(#c6c6c6 0%,#b2b2b2 45%,#8c8c8c 100%);box-shadow:2px 2px 3px rgba(0,0,0,.25)"></div>

<svg style="left:0px;top:150px" width="120" height="140" viewBox="0 150 120 140">
<defs>
<clipPath id="gclip"><path d="M11 167 L13 166 L17 167.5 L20 167 L24 169 L28 169.5 L32 171 L36 172 L40 173 L44 175 L50 177 L47 164 L46.5 159 L48 157.5 L50 159 L55 167 L62 176 L66 177 L72 180 L77 174 L83 169 L87 167.5 L88.5 169 L86 176 L79 186 L82 191 L92 192 L100 193 L104.5 194 L98 197 L86 200.5 L80 205 L79.5 222 L78.5 232 L77.6 240 L75.6 250.6 L70.7 260.3 L63.4 268.5 L57 272.5 L49.6 268.5 L46.3 261.5 L45.5 271 L39 280 L11 281 Z"/></clipPath>
<filter id="gtex" x="0" y="150" width="120" height="140" filterUnits="userSpaceOnUse">
<feTurbulence type="turbulence" baseFrequency="0.42 0.3" numOctaves="3" seed="8" result="n"/>
<feColorMatrix in="n" type="matrix" values="0 0 0 0 0.82  0 0 0 0 0  0 0 0 0 0  3.4 0 0 0 -0.5"/>
</filter>
<linearGradient id="gdark" gradientUnits="userSpaceOnUse" x1="0" y1="165" x2="0" y2="281"><stop offset="0" stop-color="#000" stop-opacity="0.0"/><stop offset="0.5" stop-color="#000" stop-opacity="0.25"/><stop offset="1" stop-color="#000" stop-opacity="0.55"/></linearGradient>
<filter id="gglow" x="-20%" y="-20%" width="140%" height="140%"><feGaussianBlur stdDeviation="1"/></filter>
</defs>
<path d="M11 167 L13 166 L17 167.5 L20 167 L24 169 L28 169.5 L32 171 L36 172 L40 173 L44 175 L50 177 L47 164 L46.5 159 L48 157.5 L50 159 L55 167 L62 176 L66 177 L72 180 L77 174 L83 169 L87 167.5 L88.5 169 L86 176 L79 186 L82 191 L92 192 L100 193 L104.5 194 L98 197 L86 200.5 L80 205 L79.5 222 L78.5 232 L77.6 240 L75.6 250.6 L70.7 260.3 L63.4 268.5 L57 272.5 L49.6 268.5 L46.3 261.5 L45.5 271 L39 280 L11 281 Z" fill="#000" stroke="#000" stroke-width="2.5" stroke-linejoin="round"/>
<g clip-path="url(#gclip)">
<rect x="0" y="150" width="120" height="140" fill="#2a0000"/>
<rect x="0" y="150" width="120" height="140" filter="url(#gtex)"/>
<rect x="0" y="150" width="120" height="140" fill="url(#gdark)"/>
<path d="M46 191 Q52 183 60 183 Q70 182 77 187 Q80 190 80 205 L79 232 L77 243 L73 251 L62 263 L54 262 Q47 236 45.5 220 Q44 206 46 191 Z" fill="#120000" opacity="0.5"/>
<path d="M49 177 L47 164 L46.5 159 L48 157.5 L50 159 L55 167 L62 176 Z M72 180 L77 174 L83 169 L87 167.5 L88.5 169 L86 176 L79 186 Z M82 191 L92 192 L100 193 L104.5 194 L98 197 L86 200.5 L80 205 Z" fill="#0a0000"/>
<path d="M26 180.5 L38 184 L47 188 L47 197 L40 192 Z" fill="#0a0000"/>
</g>
<g fill="none" stroke-linejoin="round" stroke-linecap="round">
<g stroke="#ff1a1a" stroke-width="2.8" opacity="0.75" filter="url(#gglow)">
<path d="M50 177 L47 164 L46.5 159 L48 157.5 L50 159 L55 167 L62 176 M72 180 L77 174 L83 169 L87 167.5 L88.5 169 L86 176 L79 186 M82 191 L92 192 L100 193 L104.5 194 L98 197 L86 200.5 L80 205 L79.5 222 L78.5 232 L77.6 240 L75.6 250.6 L70.7 260.3 L63.4 268.5 L57 272.5 L49.6 268.5 L46.3 261.5 L45.5 271 L39 280"/>
</g>
<g stroke="#ff2020" stroke-width="1">
<path d="M50.5 176 L48 164 L48 159.5 L54 168 L60 176.5 M73 180 L78 175 L84 170 L87 169 L85 176 L79 185 M82.5 192 L100 193.5 L103 194.2 L97 196.5 L86 199.8 L79.5 205 L79 222 L78 232 L77 240 L75 250.3 L70.2 259.8 L63 267.8 L57 271.6 L50 267.8 L46.6 260.5 L45 270.5 L38.6 279.5"/>
<path d="M26 180.5 L38 184 L47 188 M26 180.5 L36 187 L46 196" stroke-width="1.4"/>
<path d="M46 191 Q52 183 60 182 Q70 182 77 187 Q80 190 80 196" stroke-width="1.3"/>
<path d="M47 190 Q43 205 41.5 226 Q41 245 42.5 258" stroke-width="1.2"/>
<path d="M49 200 Q47 215 49 232 Q52 245 56 256 Q60 262 64 260 Q70 252 74 240" stroke="#b00c0c" stroke-width="0.9"/>
<ellipse cx="50.5" cy="196.5" rx="2.3" ry="2.1" fill="#000"/><ellipse cx="76.5" cy="201" rx="2.3" ry="2.1" fill="#000"/>
<path d="M56 224 Q58 218 63 218.5 Q69 219 70 224 Q66 229.5 56 224 Z" fill="#180000" stroke-width="1.3"/>
<path d="M58 233 Q63 238 68 233 M53 240 Q56 250 55 262 M67 238 Q69 248 66 258 M60 244 L61 256"/>
</g>
<g clip-path="url(#gclip)"><path d="M51.0 224.9 Q51.0 229.0 55.2 233.2 M75.8 193.2 Q75.2 195.9 73.2 198.5 M58.4 225.8 Q57.3 230.5 60.6 235.2 M71.4 237.6 Q70.4 241.7 68.8 245.8 M77.4 203.1 Q76.6 207.6 77.6 212.0 M65.3 205.4 Q61.2 210.4 61.5 215.3 M61.5 208.5 Q60.0 211.1 59.3 213.7 M51.6 237.8 Q48.6 240.8 49.1 243.7 M48.0 202.9 Q50.6 206.6 48.3 210.3 M68.6 213.1 Q72.5 215.5 70.3 217.9 M61.3 239.1 Q64.5 241.5 63.7 243.9 M65.2 210.8 Q64.7 214.2 68.1 217.5 M47.8 250.1 Q50.7 253.9 50.8 257.8 M53.1 192.6 Q48.5 196.8 49.5 201.1 M72.0 202.1 Q72.0 204.6 74.6 207.1 M69.5 224.5 Q70.0 229.8 72.6 235.0 M55.0 260.4 Q55.5 266.1 56.8 271.8 M56.7 243.2 Q57.3 245.6 59.0 248.0 M54.6 250.5 Q55.3 255.6 54.1 260.7 M68.5 245.8 Q71.2 251.2 72.4 256.6 M51.5 220.8 Q51.0 225.6 47.4 230.5 M48.1 214.6 Q44.5 217.3 45.2 220.0 M54.6 214.4 Q54.4 217.0 52.6 219.5 M52.0 224.9 Q50.0 227.6 51.3 230.4 M48.2 196.5 Q46.5 200.9 47.0 205.3 M66.9 214.1 Q66.9 217.0 68.0 219.9 M75.3 196.6 Q77.9 199.4 74.9 202.2 M75.1 239.8 Q75.4 242.4 73.5 245.0" stroke="#d01010" stroke-width="0.7" opacity="0.7"/></g>
<g stroke="#e01010" stroke-width="0.8" opacity="0.8">
<path d="M52 205 Q58 200 62 210 M68 206 Q74 210 72 220 M54 212 L56 220 M70 228 L74 236 M50 240 L54 250"/>
</g>
</g>
</svg>

<div class=a style="left:51px;top:332px;width:11px;height:11px;border-radius:50%;background:radial-gradient(circle at 45% 40%,#50ff50,#10d010);box-shadow:1px 1px 1px rgba(80,40,60,.3)"></div>
<svg style="left:53px;top:330px" width="10" height="11" viewBox="0 0 10 11"><path d="M1.2 5.8 L2.2 5.2 L3.6 8.6 L8.6 0.4" fill="none" stroke="#000" stroke-width="1.1"/></svg><div class=a style="left:51px;top:361px;width:11px;height:11px;border-radius:50%;background:radial-gradient(circle at 45% 40%,#50ff50,#10d010);box-shadow:1px 1px 1px rgba(80,40,60,.3)"></div>
<svg style="left:53px;top:359px" width="10" height="11" viewBox="0 0 10 11"><path d="M1.2 5.8 L2.2 5.2 L3.6 8.6 L8.6 0.4" fill="none" stroke="#000" stroke-width="1.1"/></svg>
<div class=a style="left:252px;top:363px;width:247px;height:112px;border:1px solid;border-color:#f1efe2 #aca899 #aca899 #f1efe2"></div>
<div class=a style="left:255px;top:366px;width:45px;height:16px;border:1px solid;border-color:#aca899 #f1efe2 #f1efe2 #aca899"></div>
<div class=a style="left:302px;top:366px;width:77px;height:16px;border:1px solid;border-color:#aca899 #f1efe2 #f1efe2 #aca899"></div>
<div class=a style="left:381px;top:366px;width:66px;height:16px;border:1px solid;border-color:#aca899 #f1efe2 #f1efe2 #aca899"></div>
<div class=a style="left:449px;top:366px;width:47px;height:16px;border:1px solid;border-color:#aca899 #f1efe2 #f1efe2 #aca899"></div>
<div class=a style="left:255px;top:384px;width:45px;height:16px;border:1px solid;border-color:#aca899 #f1efe2 #f1efe2 #aca899"></div>
<div class=a style="left:302px;top:384px;width:77px;height:16px;border:1px solid;border-color:#aca899 #f1efe2 #f1efe2 #aca899"></div>
<div class=a style="left:381px;top:384px;width:66px;height:16px;border:1px solid;border-color:#aca899 #f1efe2 #f1efe2 #aca899"></div>
<div class=a style="left:255px;top:402px;width:45px;height:16px;border:1px solid;border-color:#aca899 #f1efe2 #f1efe2 #aca899"></div>
<div class=a style="left:302px;top:402px;width:77px;height:16px;border:1px solid;border-color:#aca899 #f1efe2 #f1efe2 #aca899"></div>
<div class=a style="left:381px;top:402px;width:66px;height:16px;border:1px solid;border-color:#aca899 #f1efe2 #f1efe2 #aca899"></div>
<div class=a style="left:255px;top:420px;width:45px;height:16px;border:1px solid;border-color:#aca899 #f1efe2 #f1efe2 #aca899"></div>
<div class=a style="left:302px;top:420px;width:77px;height:16px;border:1px solid;border-color:#aca899 #f1efe2 #f1efe2 #aca899"></div>
<div class=a style="left:381px;top:420px;width:66px;height:16px;border:1px solid;border-color:#aca899 #f1efe2 #f1efe2 #aca899"></div>
<div class=a style="left:255px;top:438px;width:45px;height:16px;border:1px solid;border-color:#aca899 #f1efe2 #f1efe2 #aca899"></div>
<div class=a style="left:302px;top:438px;width:77px;height:16px;border:1px solid;border-color:#aca899 #f1efe2 #f1efe2 #aca899"></div>
<div class=a style="left:381px;top:438px;width:66px;height:16px;border:1px solid;border-color:#aca899 #f1efe2 #f1efe2 #aca899"></div>
<div class=a style="left:255px;top:456px;width:45px;height:16px;border:1px solid;border-color:#aca899 #f1efe2 #f1efe2 #aca899"></div>
<div class=a style="left:302px;top:456px;width:77px;height:16px;border:1px solid;border-color:#aca899 #f1efe2 #f1efe2 #aca899"></div>
<div class=a style="left:381px;top:456px;width:66px;height:16px;border:1px solid;border-color:#aca899 #f1efe2 #f1efe2 #aca899"></div>
<svg style="left:700px;top:493px" width="14" height="38" viewBox="0 0 14 38"><path d="M4 1 Q11 18 3 37" fill="none" stroke="#e01818" stroke-width="1.6"/></svg>
<div class=a style="left:767px;top:502px;width:3px;height:3px;border-radius:50%;background:#e01010"></div>
<div class=a style="left:1157px;top:136px;width:6px;height:1px;background:#000"></div><div class=a style="left:1225px;top:136px;width:6px;height:1px;background:#000"></div>
<span class=t style="left:21.0px;top:7px;font-size:13px;font-weight:bold;font-family:'Liberation Sans';font-style:normal;color:#fff;letter-spacing:0.047px;text-shadow:1px 1px 0 #0a1c8a">User Information - Windows Internet Explorer</span>
<span class=t style="left:107.0px;top:38px;font-size:11px;font-weight:normal;font-family:'Liberation Sans';font-style:normal;color:#fff;letter-spacing:0.075px;">http://neo/WebGoat/attack?Screen=71&amp;menu=10&amp;admin=true</span>
<span class=t style="left:1043.0px;top:38px;font-size:11px;font-weight:normal;font-family:'Liberation Sans';font-style:normal;color:#a0a0a0;letter-spacing:-0.8px;">Google</span>
<span class=t style="left:5.0px;top:65px;font-size:16.5px;font-weight:normal;font-family:'Liberation Serif';font-style:normal;color:#2a5ad8;letter-spacing:0.2px;-webkit-text-stroke:0.45px currentColor;text-shadow:0.5px 0.5px 0 rgba(0,0,0,.12)">G<span style="color:#d62408">o</span><span style="color:#efba00">o</span>g<span style="color:#1e9a2a">l</span><span style="color:#d62408">e</span></span>
<span class=t style="left:62.0px;top:66px;font-size:16px;font-weight:normal;font-family:'Liberation Serif';font-style:normal;color:#3050c0;letter-spacing:2.0px;">G</span>
<span class=t style="left:89.0px;top:68px;font-size:11px;font-weight:normal;font-family:'Liberation Sans';font-style:normal;color:#000;letter-spacing:-0.25px;">mediachas</span>
<span class=t style="left:166.0px;top:68px;font-size:11px;font-weight:normal;font-family:'Liberation Sans';font-style:normal;color:#000;letter-spacing:-2.0px;">Go</span>
<span class=t style="left:290.0px;top:68px;font-size:11px;font-weight:normal;font-family:'Liberation Sans';font-style:normal;color:#000;letter-spacing:-0.5px;">Bookmarks</span>
<span class=t style="left:379.0px;top:68px;font-size:11px;font-weight:normal;font-family:'Liberation Sans';font-style:normal;color:#000;letter-spacing:-0.222px;">51 blocked</span>
<span class=t style="left:466.0px;top:68px;font-size:11px;font-weight:normal;font-family:'Liberation Sans';font-style:normal;color:#000;letter-spacing:-0.25px;">Check</span>
<span class=t style="left:540.0px;top:68px;font-size:11px;font-weight:normal;font-family:'Liberation Sans';font-style:normal;color:#000;letter-spacing:-0.286px;">AutoLink</span>
<span class=t style="left:625.0px;top:68px;font-size:11px;font-weight:normal;font-family:'Liberation Sans';font-style:normal;color:#a8a8a0;letter-spacing:-0.286px;">AutoFill</span>
<span class=t style="left:687.0px;top:68px;font-size:11px;font-weight:normal;font-family:'Liberation Sans';font-style:normal;color:#000;letter-spacing:-0.167px;">Send to</span>
<span class=t style="left:786.0px;top:68px;font-size:11px;font-weight:normal;font-family:'Liberation Sans';font-style:normal;color:#000;letter-spacing:-0.333px;">mediachase</span>
<span class=t style="left:871.0px;top:68px;font-size:11px;font-weight:normal;font-family:'Liberation Sans';font-style:normal;color:#000;letter-spacing:0.0px;">dotnetnuke</span>
<span class=t style="left:1222.0px;top:68px;font-size:11px;font-weight:normal;font-family:'Liberation Sans';font-style:normal;color:#000;letter-spacing:-0.143px;">Settings</span>
<span class=t style="left:30.0px;top:94px;font-size:11px;font-weight:normal;font-family:'Liberation Sans';font-style:normal;color:#000;letter-spacing:-0.429px;">FlashGet</span>
<span class=t style="left:110.0px;top:94px;font-size:11px;font-weight:normal;font-family:'Liberation Sans';font-style:normal;color:#000;letter-spacing:-0.333px;">Options</span>
<span class=t style="left:86.0px;top:127px;font-size:11px;font-weight:normal;font-family:'Liberation Sans';font-style:normal;color:#000;letter-spacing:0.0px;">User Information</span>
<span class=t style="left:1156.0px;top:125px;font-size:11px;font-weight:normal;font-family:'Liberation Sans';font-style:normal;color:#000;letter-spacing:-0.333px;">Page</span>
<span class=t style="left:1219.0px;top:125px;font-size:11px;font-weight:normal;font-family:'Liberation Sans';font-style:normal;color:#000;letter-spacing:-0.5px;">Tools</span>
<span class=t style="left:1.0px;top:719px;font-size:11px;font-weight:normal;font-family:'Liberation Sans';font-style:normal;color:#000;letter-spacing:-0.333px;">Done</span>
<span class=t style="left:1049.0px;top:719px;font-size:11px;font-weight:normal;font-family:'Liberation Sans';font-style:normal;color:#000;letter-spacing:0.0px;">Local intranet</span>
<span class=t style="left:1206.0px;top:719px;font-size:11px;font-weight:normal;font-family:'Liberation Sans';font-style:normal;color:#000;letter-spacing:0.333px;">100%</span>
<span class=t style="left:721.0px;top:156px;font-size:13px;font-weight:normal;font-family:'Liberation Sans';font-style:normal;color:#000;letter-spacing:0.8px;-webkit-text-stroke:0.6px #000">Logout</span>
<span class=t style="left:776.0px;top:156px;font-size:14px;font-weight:normal;font-family:'Liberation Sans';font-style:normal;color:#eeeeee;letter-spacing:0px;">?</span>
<span class=t style="left:613.84px;top:229px;transform:scaleX(1.16);transform-origin:0 0;font-size:19px;font-weight:normal;font-family:'Liberation Sans';font-style:normal;color:#fff;letter-spacing:0.57px;-webkit-text-stroke:0.2px #fff">User Information</span>
<span class=t style="left:74.0px;top:261px;font-size:14px;font-weight:normal;font-family:'Liberation Sans';font-style:normal;color:#3a3a3a;letter-spacing:0.5px;-webkit-text-stroke:0.55px #3a3a3a">OWASP  WebGoat V4</span>
<span class=t style="left:249.0px;top:262px;font-size:13px;font-weight:normal;font-family:'Liberation Sans';font-style:normal;color:#fff;letter-spacing:0.0px;-webkit-text-stroke:0.45px #fff">Show Params</span>
<span class=t style="left:350.0px;top:262px;font-size:13px;font-weight:normal;font-family:'Liberation Sans';font-style:normal;color:#fff;letter-spacing:0.364px;-webkit-text-stroke:0.45px #fff">Show Cookies</span>
<span class=t style="left:33.0px;top:293px;transform:scaleX(1.08);transform-origin:0 0;font-size:11.5px;font-weight:normal;font-family:'Liberation Sans';font-style:normal;color:#555;letter-spacing:0.079px;">Admin Functions</span>
<span class=t style="left:46.92px;top:311px;transform:scaleX(1.08);transform-origin:0 0;font-size:9.5px;font-weight:normal;font-family:'Liberation Sans';font-style:normal;color:#1a1a1a;letter-spacing:-0.336px;text-decoration:underline;text-underline-offset:1.5px;-webkit-text-stroke:0.2px #1a1a1a">Database Dump</span>
<span class=t style="left:64.92px;top:339px;transform:scaleX(1.08);transform-origin:0 0;font-size:9.5px;font-weight:normal;font-family:'Liberation Sans';font-style:normal;color:#1a1a1a;letter-spacing:0.181px;text-decoration:underline;text-underline-offset:1.5px;-webkit-text-stroke:0.2px #1a1a1a">Product Information</span>
<span class=t style="left:64.92px;top:368px;transform:scaleX(1.08);transform-origin:0 0;font-size:9.5px;font-weight:normal;font-family:'Liberation Sans';font-style:normal;color:#1060f0;letter-spacing:0.03px;text-decoration:underline;text-underline-offset:1.5px;-webkit-text-stroke:0.15px #1060f0">User Information</span>
<span class=t style="left:46.92px;top:387px;transform:scaleX(1.08);transform-origin:0 0;font-size:9.5px;font-weight:normal;font-family:'Liberation Sans';font-style:normal;color:#1a1a1a;letter-spacing:0.185px;text-decoration:underline;text-underline-offset:1.5px;-webkit-text-stroke:0.2px #1a1a1a">Report Card</span>
<span class=t style="left:32.62px;top:406px;transform:scaleX(1.08);transform-origin:0 0;font-size:11.5px;font-weight:normal;font-family:'Liberation Sans';font-style:normal;color:#555;letter-spacing:0.182px;">General</span>
<span class=t style="left:32.62px;top:419px;transform:scaleX(1.08);transform-origin:0 0;font-size:11.5px;font-weight:normal;font-family:'Liberation Sans';font-style:normal;color:#555;letter-spacing:0.17px;">Code Quality</span>
<span class=t style="left:32.62px;top:432px;transform:scaleX(1.08);transform-origin:0 0;font-size:11.5px;font-weight:normal;font-family:'Liberation Sans';font-style:normal;color:#555;letter-spacing:0.2px;">Unvalidated Parameters</span>
<span class=t style="left:32.62px;top:445px;transform:scaleX(1.08);transform-origin:0 0;font-size:11.5px;font-weight:normal;font-family:'Liberation Sans';font-style:normal;color:#555;letter-spacing:0.19px;">Broken Access Control</span>
<span class=t style="left:32.62px;top:458px;transform:scaleX(1.08);transform-origin:0 0;font-size:11.5px;font-weight:normal;font-family:'Liberation Sans';font-style:normal;color:#555;letter-spacing:0.257px;">Broken Authentication and</span>
<span class=t style="left:31.62px;top:470px;transform:scaleX(1.08);transform-origin:0 0;font-size:11.5px;font-weight:normal;font-family:'Liberation Sans';font-style:normal;color:#555;letter-spacing:0.082px;">Session Management</span>
<span class=t style="left:32.62px;top:483px;transform:scaleX(1.08);transform-origin:0 0;font-size:11.5px;font-weight:normal;font-family:'Liberation Sans';font-style:normal;color:#555;letter-spacing:0.244px;">Cross-Site Scripting (XSS)</span>
<span class=t style="left:32.62px;top:496px;transform:scaleX(1.08);transform-origin:0 0;font-size:11.5px;font-weight:normal;font-family:'Liberation Sans';font-style:normal;color:#555;letter-spacing:0.349px;">Buffer Overflows</span>
<span class=t style="left:32.62px;top:509px;transform:scaleX(1.08);transform-origin:0 0;font-size:11.5px;font-weight:normal;font-family:'Liberation Sans';font-style:normal;color:#555;letter-spacing:0.218px;">Injection Flaws</span>
<span class=t style="left:32.62px;top:522px;transform:scaleX(1.08);transform-origin:0 0;font-size:11.5px;font-weight:normal;font-family:'Liberation Sans';font-style:normal;color:#555;letter-spacing:0.275px;">Improper Error Handling</span>
<span class=t style="left:32.62px;top:535px;transform:scaleX(1.08);transform-origin:0 0;font-size:11.5px;font-weight:normal;font-family:'Liberation Sans';font-style:normal;color:#555;letter-spacing:0.335px;">Insecure Storage</span>
<span class=t style="left:32.62px;top:548px;transform:scaleX(1.08);transform-origin:0 0;font-size:11.5px;font-weight:normal;font-family:'Liberation Sans';font-style:normal;color:#555;letter-spacing:0.256px;">Denial of Service</span>
<span class=t style="left:32.62px;top:561px;transform:scaleX(1.08);transform-origin:0 0;font-size:11.5px;font-weight:normal;font-family:'Liberation Sans';font-style:normal;color:#555;letter-spacing:0.272px;">Insecure Configuration</span>
<span class=t style="left:31.62px;top:573px;transform:scaleX(1.08);transform-origin:0 0;font-size:11.5px;font-weight:normal;font-family:'Liberation Sans';font-style:normal;color:#555;letter-spacing:0.105px;">Management</span>
<span class=t style="left:33.7px;top:586px;transform:scaleX(1.08);transform-origin:0 0;font-size:11.5px;font-weight:normal;font-family:'Liberation Sans';font-style:normal;color:#555;letter-spacing:0.143px;">Web Services</span>
<span class=t style="left:32.62px;top:599px;transform:scaleX(1.08);transform-origin:0 0;font-size:11.5px;font-weight:normal;font-family:'Liberation Sans';font-style:normal;color:#555;letter-spacing:0.141px;">Challenge</span>
<span class=t style="left:667.8px;top:298px;transform:scaleX(1.2);transform-origin:0 0;font-size:11px;font-weight:bold;font-family:'Liberation Sans';font-style:normal;color:#555;letter-spacing:0.037px;-webkit-text-stroke:0.25px #555">Restart this Lesson</span>
<span class=t style="left:253.0px;top:331px;transform:scaleX(1.2);transform-origin:0 0;font-size:12px;font-weight:bold;font-family:'Liberation Sans';font-style:normal;color:#ff0000;letter-spacing:-0.322px;-webkit-text-stroke:0.25px #f00">* Congratulations. You have successfully completed this lesson</span>
<span class=t style="left:256.8px;top:369px;transform:scaleX(1.2);transform-origin:0 0;font-size:11.5px;font-weight:bold;font-family:'Liberation Sans';font-style:normal;color:#000;letter-spacing:-0.1px;-webkit-text-stroke:0.2px #000">userid</span>
<span class=t style="left:302.8px;top:369px;transform:scaleX(1.2);transform-origin:0 0;font-size:11.5px;font-weight:bold;font-family:'Liberation Sans';font-style:normal;color:#000;letter-spacing:0.229px;-webkit-text-stroke:0.2px #000">user_name</span>
<span class=t style="left:381.8px;top:369px;transform:scaleX(1.2);transform-origin:0 0;font-size:11.5px;font-weight:bold;font-family:'Liberation Sans';font-style:normal;color:#000;letter-spacing:-0.048px;-webkit-text-stroke:0.2px #000">password</span>
<span class=t style="left:451.0px;top:369px;transform:scaleX(1.2);transform-origin:0 0;font-size:11.5px;font-weight:bold;font-family:'Liberation Sans';font-style:normal;color:#000;letter-spacing:-0.033px;-webkit-text-stroke:0.2px #000">cookie</span>
<span class=t style="left:256.4px;top:387px;transform:scaleX(1.1);transform-origin:0 0;font-size:11.5px;font-weight:normal;font-family:'Liberation Sans';font-style:normal;color:#000;letter-spacing:0.0px;-webkit-text-stroke:0.15px #000">101</span>
<span class=t style="left:304.3px;top:387px;transform:scaleX(1.1);transform-origin:0 0;font-size:11.5px;font-weight:normal;font-family:'Liberation Sans';font-style:normal;color:#000;letter-spacing:0.068px;-webkit-text-stroke:0.15px #000">jsnow</span>
<span class=t style="left:382.2px;top:387px;transform:scaleX(1.1);transform-origin:0 0;font-size:11.5px;font-weight:normal;font-family:'Liberation Sans';font-style:normal;color:#000;letter-spacing:-0.0px;-webkit-text-stroke:0.15px #000">passwd1</span>
<span class=t style="left:256.4px;top:405px;transform:scaleX(1.1);transform-origin:0 0;font-size:11.5px;font-weight:normal;font-family:'Liberation Sans';font-style:normal;color:#000;letter-spacing:0.227px;-webkit-text-stroke:0.15px #000">102</span>
<span class=t style="left:304.3px;top:405px;transform:scaleX(1.1);transform-origin:0 0;font-size:11.5px;font-weight:normal;font-family:'Liberation Sans';font-style:normal;color:#000;letter-spacing:0.424px;-webkit-text-stroke:0.15px #000">jdoe</span>
<span class=t style="left:382.2px;top:405px;transform:scaleX(1.1);transform-origin:0 0;font-size:11.5px;font-weight:normal;font-family:'Liberation Sans';font-style:normal;color:#000;letter-spacing:-0.0px;-webkit-text-stroke:0.15px #000">passwd2</span>
<span class=t style="left:256.4px;top:423px;transform:scaleX(1.1);transform-origin:0 0;font-size:11.5px;font-weight:normal;font-family:'Liberation Sans';font-style:normal;color:#000;letter-spacing:0.227px;-webkit-text-stroke:0.15px #000">103</span>
<span class=t style="left:304.3px;top:423px;transform:scaleX(1.1);transform-origin:0 0;font-size:11.5px;font-weight:normal;font-family:'Liberation Sans';font-style:normal;color:#000;letter-spacing:0.236px;-webkit-text-stroke:0.15px #000">jplane</span>
<span class=t style="left:382.2px;top:423px;transform:scaleX(1.1);transform-origin:0 0;font-size:11.5px;font-weight:normal;font-family:'Liberation Sans';font-style:normal;color:#000;letter-spacing:-0.0px;-webkit-text-stroke:0.15px #000">passwd3</span>
<span class=t style="left:256.4px;top:441px;transform:scaleX(1.1);transform-origin:0 0;font-size:11.5px;font-weight:normal;font-family:'Liberation Sans';font-style:normal;color:#000;letter-spacing:0.227px;-webkit-text-stroke:0.15px #000">104</span>
<span class=t style="left:304.3px;top:441px;transform:scaleX(1.1);transform-origin:0 0;font-size:11.5px;font-weight:normal;font-family:'Liberation Sans';font-style:normal;color:#000;letter-spacing:0.636px;-webkit-text-stroke:0.15px #000">jeff</span>
<span class=t style="left:383.3px;top:441px;transform:scaleX(1.1);transform-origin:0 0;font-size:11.5px;font-weight:normal;font-family:'Liberation Sans';font-style:normal;color:#000;letter-spacing:0.697px;-webkit-text-stroke:0.15px #000">jeff</span>
<span class=t style="left:256.4px;top:459px;transform:scaleX(1.1);transform-origin:0 0;font-size:11.5px;font-weight:normal;font-family:'Liberation Sans';font-style:normal;color:#000;letter-spacing:0.227px;-webkit-text-stroke:0.15px #000">105</span>
<span class=t style="left:304.3px;top:459px;transform:scaleX(1.1);transform-origin:0 0;font-size:11.5px;font-weight:normal;font-family:'Liberation Sans';font-style:normal;color:#000;letter-spacing:-0.121px;-webkit-text-stroke:0.15px #000">dave</span>
<span class=t style="left:383.3px;top:459px;transform:scaleX(1.1);transform-origin:0 0;font-size:11.5px;font-weight:normal;font-family:'Liberation Sans';font-style:normal;color:#000;letter-spacing:-0.061px;-webkit-text-stroke:0.15px #000">dave</span>
<span class=t style="left:558.92px;top:507px;transform:scaleX(1.08);transform-origin:0 0;font-size:11px;font-weight:normal;font-family:'Liberation Sans';font-style:normal;color:#000;letter-spacing:0.391px;">Sponsored by</span>
<span class=t style="left:643.0px;top:506px;transform:scaleX(1.05);transform-origin:0 0;font-size:13px;font-weight:bold;font-family:'Liberation Sans';font-style:normal;color:#000;letter-spacing:1.019px;-webkit-text-stroke:1px #000">ASPECT</span>
<span class=t style="left:711.95px;top:506px;transform:scaleX(1.05);transform-origin:0 0;font-size:13px;font-weight:bold;font-family:'Liberation Sans';font-style:normal;color:#bebebe;letter-spacing:1.333px;-webkit-text-stroke:0.9px #bebebe">SECURITY</span>
<span class=t style="left:709.0px;top:524px;font-size:6.5px;font-weight:bold;font-family:'Liberation Sans';font-style:italic;color:#000;letter-spacing:-0.581px;-webkit-text-stroke:0.3px #000">Application Security Specialists</span>
<span class=t style="left:296.0px;top:571px;transform:scaleX(1.08);transform-origin:0 0;font-size:11px;font-weight:normal;font-family:'Liberation Sans';font-style:normal;color:#666;letter-spacing:0.01px;">OWASP Foundation</span>
<span class=t style="left:408.0px;top:571px;font-size:10.5px;font-weight:normal;font-family:'Liberation Sans';font-style:normal;color:#999;letter-spacing:0px;">|</span>
<span class=t style="left:415.92px;top:571px;transform:scaleX(1.08);transform-origin:0 0;font-size:11px;font-weight:normal;font-family:'Liberation Sans';font-style:normal;color:#999;letter-spacing:0.09px;">Project WebGoat</span>
</body></html>
